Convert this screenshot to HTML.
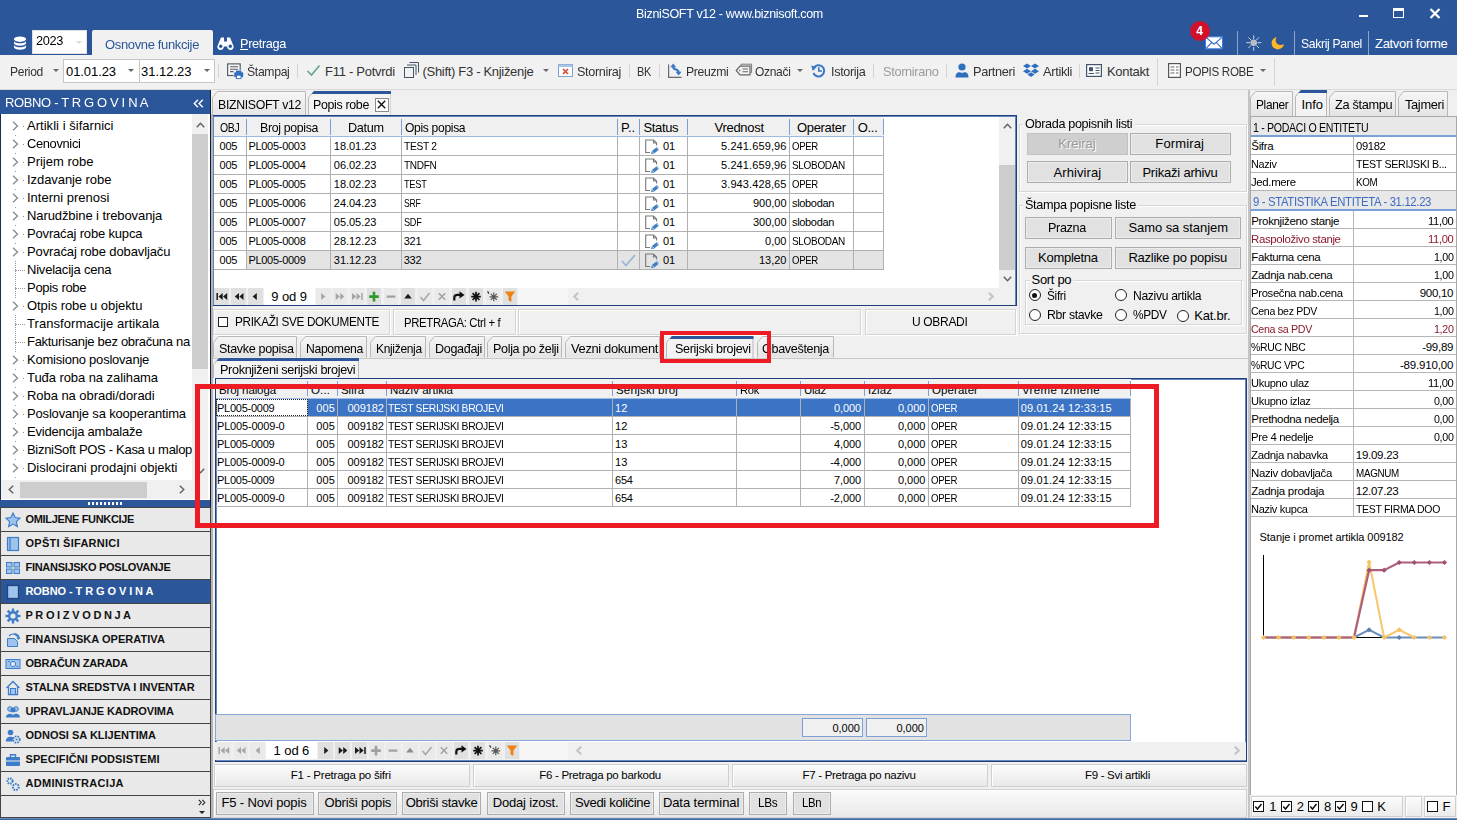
<!DOCTYPE html>
<html><head><meta charset="utf-8"><title>BizniSOFT</title>
<style>
*{box-sizing:border-box;margin:0;padding:0}
html,body{width:1457px;height:820px;overflow:hidden;background:#f0f0f0;font-family:"Liberation Sans",sans-serif;font-size:13px;color:#000}
.a{position:absolute}
.t{position:absolute;white-space:pre;letter-spacing:-0.35px;line-height:16px}
.sep{position:absolute;top:64px;width:1px;height:14px;background:#d4d4d4}
.dd{position:absolute;width:0;height:0;border-left:3px solid transparent;border-right:3px solid transparent;border-top:3px solid #666}
.c{position:absolute;border-right:1px solid #b0b0b0;border-bottom:1px solid #b0b0b0;overflow:hidden}
.btn{position:absolute;background:#e1e1e1;border:1px solid #adadad;box-shadow:inset 0 0 0 1px #ececec}
</style></head><body>
<div class="a" style="left:0;top:0;width:1457px;height:55px;background:#2b579a"></div>
<div class="t" style="top:6px;left:636px;transform:scaleX(0.963);transform-origin:0 0;letter-spacing:-0.35px;color:#fff;">BizniSOFT v12 - www.biznisoft.com</div>
<div class="a" style="left:1359px;top:15px;width:9px;height:2px;background:#fff"></div>
<div class="a" style="left:1393px;top:8px;width:11px;height:10px;border:1px solid #fff;border-top:3px solid #fff"></div>
<svg class="a" style="left:1429px;top:8px" width="12" height="11" viewBox="0 0 12 11"><path d="M1.5 1 L10.5 10 M10.5 1 L1.5 10" stroke="#fff" stroke-width="2.2"/></svg>
<svg class="a" style="left:13px;top:36px" width="14" height="15" viewBox="0 0 14 15"><ellipse cx="7" cy="3.2" rx="6" ry="2.7" fill="#fff"/><path d="M1 5.2 C2.5 8 11.5 8 13 5.2 V7.6 C11.5 10.6 2.5 10.6 1 7.6Z" fill="#fff"/><path d="M1 9.2 C2.5 12 11.5 12 13 9.2 V11.6 C11.5 14.6 2.5 14.6 1 11.6Z" fill="#fff"/></svg>
<div class="a" style="left:32px;top:30px;width:55px;height:24px;background:#fff;border:1px solid #e0e0e0"></div>
<div class="t" style="top:33px;left:36px;transform:scaleX(0.981);transform-origin:0 0;letter-spacing:-0.35px;">2023</div>
<div class="dd" style="left:76px;top:41px;border-top-color:#dcdcdc"></div>
<div class="a" style="left:92px;top:30px;width:121px;height:25px;background:#f1f1f1;border-radius:2px 2px 0 0"></div>
<div class="t" style="top:36.5px;left:105px;transform:scaleX(0.999);transform-origin:0 0;letter-spacing:-0.35px;color:#2b579a;">Osnovne funkcije</div>
<svg class="a" style="left:217px;top:37px" width="17" height="13" viewBox="0 0 17 13"><path d="M4 0.5h3v4h3v-4h3l3.5 8.5a3.2 3.2 0 1 1-6.3 0.5h-3.4a3.2 3.2 0 1 1-6.3-0.5Z" fill="#fff"/><circle cx="3.7" cy="9.3" r="1.7" fill="#2b579a"/><circle cx="13.3" cy="9.3" r="1.7" fill="#2b579a"/></svg>
<div class="t" style="top:36px;left:240px;transform:scaleX(0.977);transform-origin:0 0;letter-spacing:-0.35px;color:#fff;"><u>P</u>retraga</div>
<svg class="a" style="left:1205px;top:36px" width="18" height="14" viewBox="0 0 18 14"><rect x="0.5" y="0.8" width="17" height="12" fill="#fff" stroke="#3d7be0" stroke-width="1"/><path d="M1 1.4 L9 8.2 L17 1.4 M1 12.4 L6.8 6.4 M17 12.4 L11.2 6.4" fill="none" stroke="#2f6bc9" stroke-width="1.1"/></svg>
<div class="a" style="left:1189.7px;top:21px;width:20px;height:20px;border-radius:10px;background:#d1102a;color:#fff;font-weight:bold;font-size:12px;text-align:center;line-height:21px">4</div>
<div class="a" style="left:1237px;top:31px;width:1px;height:24px;background:#8fa6cc"></div>
<svg class="a" style="left:1245px;top:34px" width="18" height="18" viewBox="0 0 18 18"><g stroke="#c3d3ee" stroke-width="1"><path d="M8.7 1.2v4M8.7 12.8v4M1.2 8.7h4M12.4 8.7h4M3.4 3.4l2.6 2.6M11.4 11.4l2.6 2.6M14 3.4l-2.6 2.6M6 11.4l-2.6 2.6"/></g><circle cx="8.7" cy="8.7" r="3.3" fill="#b9bdc6"/></svg>
<svg class="a" style="left:1270px;top:35px" width="16" height="16" viewBox="0 0 16 16"><defs><mask id="mm"><rect width="16" height="16" fill="#fff"/><circle cx="10.6" cy="5.2" r="4.9" fill="#000"/></mask></defs><circle cx="7.8" cy="8.2" r="6.2" fill="#fdb627" mask="url(#mm)"/></svg>
<div class="a" style="left:1294px;top:31px;width:1px;height:24px;background:#8fa6cc"></div>
<div class="t" style="top:36px;left:1301px;transform:scaleX(0.936);transform-origin:0 0;letter-spacing:-0.35px;color:#fff;">Sakrij Panel</div>
<div class="a" style="left:1368px;top:31px;width:1px;height:24px;background:#8fa6cc"></div>
<div class="t" style="top:36px;left:1375px;letter-spacing:-0.31px;color:#fff;">Zatvori forme</div>
<div class="a" style="left:0;top:55px;width:1457px;height:35px;background:#f1f1f1;border-bottom:1px solid #d9d9d9"></div>
<div class="t" style="top:63.8px;left:10px;transform:scaleX(0.930);transform-origin:0 0;letter-spacing:-0.35px;color:#333;">Period</div>
<div class="dd" style="left:53px;top:69px"></div>
<div class="a" style="left:63px;top:59px;width:77px;height:24px;background:#fff;border:1px solid #c6c6c6"></div>
<div class="a" style="left:139px;top:59px;width:76px;height:24px;background:#fff;border:1px solid #c6c6c6"></div>
<div class="t" style="top:63.8px;left:66px;letter-spacing:-0.08px;">01.01.23</div>
<div class="t" style="top:63.8px;left:141px;letter-spacing:-0.01px;">31.12.23</div>
<div class="dd" style="left:128px;top:69px"></div>
<div class="dd" style="left:204px;top:69px"></div>
<div class="sep" style="left:218px"></div>
<svg class="a" style="left:226px;top:62px" width="19" height="18" viewBox="0 0 19 18"><rect x="1.6" y="1.9" width="12.6" height="11.6" fill="#f6f6f6" stroke="#5a6068" stroke-width="1.2"/><path d="M4 4.8h8M4 7.2h8M4 9.6h4" stroke="#5a6068" stroke-width="1.1"/><rect x="7.6" y="8" width="10.2" height="9.4" fill="#f1f1f1"/><rect x="8.2" y="10.2" width="9" height="5" rx="1" fill="#2f6fc0"/><rect x="10" y="8.6" width="5.4" height="2.2" fill="#2f6fc0"/><rect x="10.4" y="13.2" width="4.6" height="3.4" fill="#fff" stroke="#2f6fc0" stroke-width="0.9"/></svg>
<div class="t" style="top:63.8px;left:246.5px;transform:scaleX(0.939);transform-origin:0 0;letter-spacing:-0.35px;color:#333;">Štampaj</div>
<div class="sep" style="left:297px"></div>
<svg class="a" style="left:306px;top:64px" width="15" height="13" viewBox="0 0 15 13"><path d="M1.5 7 L5.5 11 L13.5 1.5" fill="none" stroke="#6aa58a" stroke-width="1.7"/></svg>
<div class="t" style="top:63.8px;left:325px;letter-spacing:-0.27px;color:#333;">F11 - Potvrdi</div>
<svg class="a" style="left:403px;top:62px" width="17" height="17" viewBox="0 0 17 17"><path d="M6.5 0.5h9v10" fill="none" stroke="#44546a" stroke-width="1"/><path d="M4 3h9v10" fill="none" stroke="#44546a" stroke-width="1"/><rect x="1.5" y="5.5" width="9" height="10" fill="#f1f1f1" stroke="#44546a" stroke-width="1"/></svg>
<div class="t" style="top:63.8px;left:422.5px;letter-spacing:-0.31px;color:#333;">(Shift) F3 - Knjiženje</div>
<div class="dd" style="left:543px;top:69px"></div>
<svg class="a" style="left:558px;top:63px" width="15" height="15" viewBox="0 0 15 15"><rect x="0.5" y="1.5" width="14" height="12" fill="#fff" stroke="#7aa3d8" stroke-width="1"/><rect x="0.5" y="1.5" width="14" height="2.5" fill="#a9c4e8"/><path d="M5 6l5 5M10 6l-5 5" stroke="#d8452e" stroke-width="1.6"/></svg>
<div class="t" style="top:63.8px;left:576.5px;transform:scaleX(0.972);transform-origin:0 0;letter-spacing:-0.35px;color:#333;">Storniraj</div>
<div class="sep" style="left:628.5px"></div>
<div class="t" style="top:63.8px;left:637px;transform:scaleX(0.841);transform-origin:0 0;letter-spacing:-0.35px;color:#333;">BK</div>
<div class="sep" style="left:658.5px"></div>
<svg class="a" style="left:667px;top:62px" width="16" height="17" viewBox="0 0 16 17"><path d="M1.6 2.5V15.3H14.6" fill="none" stroke="#6a6a6a" stroke-width="1.2"/><path d="M6.2 5 C6.2 8.6 11.6 6.4 11.6 10.2" fill="none" stroke="#3a78c4" stroke-width="2.1"/><path d="M3.2 5.2h6L6.2 1.4z" fill="#3a78c4"/><path d="M8.6 9.8h6l-3 3.8z" fill="#3a78c4"/></svg>
<div class="t" style="top:63.8px;left:686px;transform:scaleX(0.939);transform-origin:0 0;letter-spacing:-0.35px;color:#333;">Preuzmi</div>
<svg class="a" style="left:735px;top:63px" width="18" height="14" viewBox="0 0 18 14"><path d="M6 2.6V1.2h10.6v8.4h-1.2" fill="none" stroke="#777" stroke-width="1"/><path d="M5 3.2h10v8.6H5L1.2 7.5Z" fill="#f3f3f3" stroke="#666" stroke-width="1.2"/><path d="M7.5 6h5.5M7.5 8.8h5.5" stroke="#666" stroke-width="1.1"/><circle cx="4.8" cy="7.5" r="0.8" fill="#666"/></svg>
<div class="t" style="top:63.8px;left:755px;transform:scaleX(0.925);transform-origin:0 0;letter-spacing:-0.35px;color:#333;">Označi</div>
<div class="dd" style="left:797px;top:69px"></div>
<svg class="a" style="left:811px;top:63px" width="15" height="15" viewBox="0 0 15 15"><path d="M2.6 5.2 A5.6 5.6 0 1 1 2.4 10" fill="none" stroke="#3a78c4" stroke-width="2"/><path d="M0.2 2.6 L5.6 4 L1.8 8Z" fill="#3a78c4"/><path d="M7.8 4.2v3.8h3.2" fill="none" stroke="#3a78c4" stroke-width="1.6"/></svg>
<div class="t" style="top:63.8px;left:831px;transform:scaleX(0.972);transform-origin:0 0;letter-spacing:-0.35px;color:#333;">Istorija</div>
<div class="sep" style="left:873px"></div>
<div class="t" style="top:63.8px;left:882.5px;transform:scaleX(0.983);transform-origin:0 0;letter-spacing:-0.35px;color:#9b9b9b;">Stornirano</div>
<div class="sep" style="left:945.5px"></div>
<svg class="a" style="left:955px;top:63px" width="14" height="15" viewBox="0 0 14 15"><circle cx="7" cy="4" r="3.6" fill="#2f6fc0"/><path d="M0.5 14.5 C0.5 9 4 8.5 7 10 C10 8.5 13.5 9 13.5 14.5Z" fill="#2f6fc0"/></svg>
<div class="t" style="top:63.8px;left:973px;transform:scaleX(0.983);transform-origin:0 0;letter-spacing:-0.35px;color:#333;">Partneri</div>
<svg class="a" style="left:1023px;top:63px" width="16" height="15" viewBox="0 0 16 15"><path d="M4 0.5 L8 3 L4 5.5 L0 3Z M12 0.5 L16 3 L12 5.5 L8 3Z M4 5.8 L8 8.3 L4 10.8 L0 8.3Z M12 5.8 L16 8.3 L12 10.8 L8 8.3Z M8 9.3 L11.6 11.6 L8 14 L4.4 11.6Z" fill="#2f6fc0"/></svg>
<div class="t" style="top:63.8px;left:1043px;transform:scaleX(0.989);transform-origin:0 0;letter-spacing:-0.35px;color:#333;">Artikli</div>
<div class="sep" style="left:1078.5px"></div>
<svg class="a" style="left:1086px;top:64px" width="16" height="13" viewBox="0 0 16 13"><rect x="0.6" y="0.6" width="14.8" height="11.8" fill="#fff" stroke="#44546a" stroke-width="1.2"/><rect x="3" y="3.2" width="4" height="4" fill="#44546a"/><path d="M2.5 9.5h5.5M9.5 4h4M9.5 6.5h4M9.5 9h4" stroke="#44546a" stroke-width="1.1"/></svg>
<div class="t" style="top:63.8px;left:1107px;letter-spacing:-0.3px;color:#333;">Kontakt</div>
<div class="sep" style="left:1157px;top:58px;height:28px"></div>
<svg class="a" style="left:1168px;top:63px" width="13" height="15" viewBox="0 0 13 15"><rect x="0.6" y="0.6" width="11.8" height="13.8" fill="#fff" stroke="#555" stroke-width="1.2"/><path d="M2.5 4h4M2.5 7h4M2.5 10h4M8 4h2.5M8 7h2.5M8 10h2.5" stroke="#666" stroke-width="1"/></svg>
<div class="t" style="top:63.8px;left:1185px;transform:scaleX(0.893);transform-origin:0 0;letter-spacing:-0.35px;color:#333;">POPIS ROBE</div>
<div class="dd" style="left:1260px;top:69px"></div>
<div class="sep" style="left:1274px;top:58px;height:28px"></div>
<div class="a" style="left:0;top:90px;width:211px;height:418px;background:#fff;border-left:1px solid #1b2f55;border-right:1px solid #1b2f55;border-top:1px solid #14233f"></div>
<div class="a" style="left:0;top:507px;width:1px;height:311px;background:#444"></div>
<div class="a" style="left:0;top:90px;width:210px;height:24px;background:#2b579a"></div>
<div class="t" style="top:95px;left:5px;transform:scaleX(0.999);transform-origin:0 0;letter-spacing:-0.35px;color:#fff;">ROBNO - T R G O V I N A</div>
<svg class="a" style="left:193px;top:99px" width="11" height="9" viewBox="0 0 11 9"><path d="M5 0.8 L1.3 4.5 L5 8.2 M9.8 0.8 L6.1 4.5 L9.8 8.2" fill="none" stroke="#fff" stroke-width="1.4"/></svg>
<div class="a" style="left:1px;top:114px;width:191px;height:366px;overflow:hidden">
<div class="a" style="left:13.5px;top:18px;width:0;height:348px;border-left:1px dotted #9a9a9a"></div>
<div class="a" style="left:9px;top:4px;width:10px;height:16px;background:#fff"></div>
<svg class="a" style="left:11px;top:7px" width="7" height="10" viewBox="0 0 7 10"><path d="M1 0.8 L5.5 5 L1 9.2" fill="none" stroke="#8a8a8a" stroke-width="1.3"/></svg>
<div class="a" style="left:22px;top:12px;width:1px;height:1px;background:#8a8a8a"></div>
<div class="t" style="top:4px;left:26px;letter-spacing:0.03px;">Artikli i šifarnici</div>
<div class="a" style="left:9px;top:22px;width:10px;height:16px;background:#fff"></div>
<svg class="a" style="left:11px;top:25px" width="7" height="10" viewBox="0 0 7 10"><path d="M1 0.8 L5.5 5 L1 9.2" fill="none" stroke="#8a8a8a" stroke-width="1.3"/></svg>
<div class="a" style="left:22px;top:30px;width:1px;height:1px;background:#8a8a8a"></div>
<div class="t" style="top:22px;left:26px;transform:scaleX(0.992);transform-origin:0 0;letter-spacing:-0.35px;">Cenovnici</div>
<div class="a" style="left:9px;top:40px;width:10px;height:16px;background:#fff"></div>
<svg class="a" style="left:11px;top:43px" width="7" height="10" viewBox="0 0 7 10"><path d="M1 0.8 L5.5 5 L1 9.2" fill="none" stroke="#8a8a8a" stroke-width="1.3"/></svg>
<div class="a" style="left:22px;top:48px;width:1px;height:1px;background:#8a8a8a"></div>
<div class="t" style="top:40px;left:26px;letter-spacing:-0.01px;">Prijem robe</div>
<div class="a" style="left:9px;top:58px;width:10px;height:16px;background:#fff"></div>
<svg class="a" style="left:11px;top:61px" width="7" height="10" viewBox="0 0 7 10"><path d="M1 0.8 L5.5 5 L1 9.2" fill="none" stroke="#8a8a8a" stroke-width="1.3"/></svg>
<div class="a" style="left:22px;top:66px;width:1px;height:1px;background:#8a8a8a"></div>
<div class="t" style="top:58px;left:26px;letter-spacing:-0.07px;">Izdavanje robe</div>
<div class="a" style="left:9px;top:76px;width:10px;height:16px;background:#fff"></div>
<svg class="a" style="left:11px;top:79px" width="7" height="10" viewBox="0 0 7 10"><path d="M1 0.8 L5.5 5 L1 9.2" fill="none" stroke="#8a8a8a" stroke-width="1.3"/></svg>
<div class="a" style="left:22px;top:84px;width:1px;height:1px;background:#8a8a8a"></div>
<div class="t" style="top:76px;left:26px;letter-spacing:0.0px;">Interni prenosi</div>
<div class="a" style="left:9px;top:94px;width:10px;height:16px;background:#fff"></div>
<svg class="a" style="left:11px;top:97px" width="7" height="10" viewBox="0 0 7 10"><path d="M1 0.8 L5.5 5 L1 9.2" fill="none" stroke="#8a8a8a" stroke-width="1.3"/></svg>
<div class="a" style="left:22px;top:102px;width:1px;height:1px;background:#8a8a8a"></div>
<div class="t" style="top:94px;left:26px;letter-spacing:-0.09px;">Narudžbine i trebovanja</div>
<div class="a" style="left:9px;top:112px;width:10px;height:16px;background:#fff"></div>
<svg class="a" style="left:11px;top:115px" width="7" height="10" viewBox="0 0 7 10"><path d="M1 0.8 L5.5 5 L1 9.2" fill="none" stroke="#8a8a8a" stroke-width="1.3"/></svg>
<div class="a" style="left:22px;top:120px;width:1px;height:1px;background:#8a8a8a"></div>
<div class="t" style="top:112px;left:26px;letter-spacing:-0.17px;">Povraćaj robe kupca</div>
<div class="a" style="left:9px;top:130px;width:10px;height:16px;background:#fff"></div>
<svg class="a" style="left:11px;top:133px" width="7" height="10" viewBox="0 0 7 10"><path d="M1 0.8 L5.5 5 L1 9.2" fill="none" stroke="#8a8a8a" stroke-width="1.3"/></svg>
<div class="a" style="left:22px;top:138px;width:1px;height:1px;background:#8a8a8a"></div>
<div class="t" style="top:130px;left:26px;letter-spacing:-0.11px;">Povraćaj robe dobavljaču</div>
<div class="a" style="left:14px;top:156px;width:10px;height:0;border-top:1px dotted #9a9a9a"></div>
<div class="t" style="top:148px;left:26px;letter-spacing:-0.21px;">Nivelacija cena</div>
<div class="a" style="left:14px;top:174px;width:10px;height:0;border-top:1px dotted #9a9a9a"></div>
<div class="t" style="top:166px;left:26px;letter-spacing:-0.29px;">Popis robe</div>
<div class="a" style="left:9px;top:184px;width:10px;height:16px;background:#fff"></div>
<svg class="a" style="left:11px;top:187px" width="7" height="10" viewBox="0 0 7 10"><path d="M1 0.8 L5.5 5 L1 9.2" fill="none" stroke="#8a8a8a" stroke-width="1.3"/></svg>
<div class="a" style="left:22px;top:192px;width:1px;height:1px;background:#8a8a8a"></div>
<div class="t" style="top:184px;left:26px;letter-spacing:-0.05px;">Otpis robe u objektu</div>
<div class="a" style="left:14px;top:210px;width:10px;height:0;border-top:1px dotted #9a9a9a"></div>
<div class="t" style="top:202px;left:26px;letter-spacing:0.06px;">Transformacije artikala</div>
<div class="a" style="left:14px;top:228px;width:10px;height:0;border-top:1px dotted #9a9a9a"></div>
<div class="t" style="top:220px;left:26px;letter-spacing:-0.3px;">Fakturisanje bez obračuna na</div>
<div class="a" style="left:9px;top:238px;width:10px;height:16px;background:#fff"></div>
<svg class="a" style="left:11px;top:241px" width="7" height="10" viewBox="0 0 7 10"><path d="M1 0.8 L5.5 5 L1 9.2" fill="none" stroke="#8a8a8a" stroke-width="1.3"/></svg>
<div class="a" style="left:22px;top:246px;width:1px;height:1px;background:#8a8a8a"></div>
<div class="t" style="top:238px;left:26px;letter-spacing:-0.22px;">Komisiono poslovanje</div>
<div class="a" style="left:9px;top:256px;width:10px;height:16px;background:#fff"></div>
<svg class="a" style="left:11px;top:259px" width="7" height="10" viewBox="0 0 7 10"><path d="M1 0.8 L5.5 5 L1 9.2" fill="none" stroke="#8a8a8a" stroke-width="1.3"/></svg>
<div class="a" style="left:22px;top:264px;width:1px;height:1px;background:#8a8a8a"></div>
<div class="t" style="top:256px;left:26px;letter-spacing:-0.07px;">Tuđa roba na zalihama</div>
<div class="a" style="left:9px;top:274px;width:10px;height:16px;background:#fff"></div>
<svg class="a" style="left:11px;top:277px" width="7" height="10" viewBox="0 0 7 10"><path d="M1 0.8 L5.5 5 L1 9.2" fill="none" stroke="#8a8a8a" stroke-width="1.3"/></svg>
<div class="a" style="left:22px;top:282px;width:1px;height:1px;background:#8a8a8a"></div>
<div class="t" style="top:274px;left:26px;letter-spacing:-0.05px;">Roba na obradi/doradi</div>
<div class="a" style="left:9px;top:292px;width:10px;height:16px;background:#fff"></div>
<svg class="a" style="left:11px;top:295px" width="7" height="10" viewBox="0 0 7 10"><path d="M1 0.8 L5.5 5 L1 9.2" fill="none" stroke="#8a8a8a" stroke-width="1.3"/></svg>
<div class="a" style="left:22px;top:300px;width:1px;height:1px;background:#8a8a8a"></div>
<div class="t" style="top:292px;left:26px;letter-spacing:-0.17px;">Poslovanje sa kooperantima</div>
<div class="a" style="left:9px;top:310px;width:10px;height:16px;background:#fff"></div>
<svg class="a" style="left:11px;top:313px" width="7" height="10" viewBox="0 0 7 10"><path d="M1 0.8 L5.5 5 L1 9.2" fill="none" stroke="#8a8a8a" stroke-width="1.3"/></svg>
<div class="a" style="left:22px;top:318px;width:1px;height:1px;background:#8a8a8a"></div>
<div class="t" style="top:310px;left:26px;letter-spacing:-0.21px;">Evidencija ambalaže</div>
<div class="a" style="left:9px;top:328px;width:10px;height:16px;background:#fff"></div>
<svg class="a" style="left:11px;top:331px" width="7" height="10" viewBox="0 0 7 10"><path d="M1 0.8 L5.5 5 L1 9.2" fill="none" stroke="#8a8a8a" stroke-width="1.3"/></svg>
<div class="a" style="left:22px;top:336px;width:1px;height:1px;background:#8a8a8a"></div>
<div class="t" style="top:328px;left:26px;letter-spacing:-0.3px;">BizniSoft POS - Kasa u maloprodaji</div>
<div class="a" style="left:9px;top:346px;width:10px;height:16px;background:#fff"></div>
<svg class="a" style="left:11px;top:349px" width="7" height="10" viewBox="0 0 7 10"><path d="M1 0.8 L5.5 5 L1 9.2" fill="none" stroke="#8a8a8a" stroke-width="1.3"/></svg>
<div class="a" style="left:22px;top:354px;width:1px;height:1px;background:#8a8a8a"></div>
<div class="t" style="top:346px;left:26px;letter-spacing:-0.02px;">Dislocirani prodajni objekti</div>
<div class="a" style="left:9px;top:364px;width:10px;height:16px;background:#fff"></div>
<svg class="a" style="left:11px;top:367px" width="7" height="10" viewBox="0 0 7 10"><path d="M1 0.8 L5.5 5 L1 9.2" fill="none" stroke="#8a8a8a" stroke-width="1.3"/></svg>
<div class="a" style="left:22px;top:372px;width:1px;height:1px;background:#8a8a8a"></div>
<div class="t" style="top:364px;left:26px;letter-spacing:-0.3px;">Usluge u maloprodaji</div>
</div>
<div class="a" style="left:209.7px;top:90px;width:1.5px;height:418px;background:#101c36"></div>
<div class="a" style="left:192px;top:114px;width:16px;height:366px;background:#f0f0f0"></div>
<div class="a" style="left:192px;top:134px;width:16px;height:235px;background:#cdcdcd"></div>
<svg class="a" style="left:196px;top:122px" width="9" height="6" viewBox="0 0 9 6"><path d="M0.8 5.2 L4.5 1.2 L8.2 5.2" fill="none" stroke="#606060" stroke-width="1.4"/></svg>
<svg class="a" style="left:196px;top:468px" width="9" height="6" viewBox="0 0 9 6"><path d="M0.8 0.8 L4.5 4.8 L8.2 0.8" fill="none" stroke="#606060" stroke-width="1.4"/></svg>
<div class="a" style="left:1px;top:480px;width:207px;height:19px;background:#f0f0f0"></div>
<div class="a" style="left:20px;top:482px;width:127px;height:16px;background:#cdcdcd"></div>
<svg class="a" style="left:8px;top:485px" width="6" height="9" viewBox="0 0 6 9"><path d="M5.2 0.8 L1.2 4.5 L5.2 8.2" fill="none" stroke="#606060" stroke-width="1.4"/></svg>
<svg class="a" style="left:179px;top:485px" width="6" height="9" viewBox="0 0 6 9"><path d="M0.8 0.8 L4.8 4.5 L0.8 8.2" fill="none" stroke="#606060" stroke-width="1.4"/></svg>
<div class="a" style="left:0;top:500px;width:210px;height:8px;background:#2b579a"></div>
<div class="a" style="left:88px;top:502px;width:36px;height:3px;background:repeating-linear-gradient(90deg,#fff 0,#fff 2px,transparent 2px,transparent 4px)"></div>
<div class="a" style="left:1px;top:507px;width:210px;height:25px;background:#e9e9e9;border-top:1px solid #444;border-bottom:1px solid #444;border-right:1px solid #444"></div>
<svg class="a" style="left:5px;top:512px" width="16" height="16" viewBox="0 0 16 16"><path d="M8 1 L10.1 5.6 L15 6.2 L11.4 9.6 L12.4 14.6 L8 12.1 L3.6 14.6 L4.6 9.6 L1 6.2 L5.9 5.6Z" fill="#9ec3ee" stroke="#3d7cc9" stroke-width="1.1"/></svg>
<div class="t" style="top:511px;left:25.5px;letter-spacing:-0.34px;font-size:11px;color:#111;font-weight:bold;">OMILJENE FUNKCIJE</div>
<div class="a" style="left:1px;top:531px;width:210px;height:25px;background:#e9e9e9;border-top:1px solid #444;border-bottom:1px solid #444;border-right:1px solid #444"></div>
<svg class="a" style="left:5px;top:536px" width="16" height="16" viewBox="0 0 16 16"><rect x="2.5" y="1.5" width="11" height="13" fill="#9ec3ee" stroke="#3d7cc9" stroke-width="1.2"/><path d="M5 1.5v13" stroke="#3d7cc9" stroke-width="1.2"/></svg>
<div class="t" style="top:535px;left:25.5px;letter-spacing:0.26px;font-size:11px;color:#111;font-weight:bold;">OPŠTI ŠIFARNICI</div>
<div class="a" style="left:1px;top:555px;width:210px;height:25px;background:#e9e9e9;border-top:1px solid #444;border-bottom:1px solid #444;border-right:1px solid #444"></div>
<svg class="a" style="left:5px;top:560px" width="16" height="16" viewBox="0 0 16 16"><rect x="1.5" y="2.5" width="5.5" height="4.5" fill="#9ec3ee" stroke="#3d7cc9"/><rect x="9" y="2.5" width="5.5" height="4.5" fill="#9ec3ee" stroke="#3d7cc9"/><rect x="1.5" y="9" width="5.5" height="4.5" fill="#9ec3ee" stroke="#3d7cc9"/><rect x="9" y="9" width="5.5" height="4.5" fill="#9ec3ee" stroke="#3d7cc9"/></svg>
<div class="t" style="top:559px;left:25.5px;letter-spacing:-0.29px;font-size:11px;color:#111;font-weight:bold;">FINANSIJSKO POSLOVANJE</div>
<div class="a" style="left:1px;top:579px;width:210px;height:25px;background:#2b579a;border-top:1px solid #444;border-bottom:1px solid #444;border-right:1px solid #444"></div>
<svg class="a" style="left:5px;top:584px" width="16" height="16" viewBox="0 0 16 16"><rect x="2.5" y="1.5" width="11" height="13" fill="#9ec3ee" stroke="#1f4580" stroke-width="1.3"/></svg>
<div class="t" style="top:583px;left:25.5px;letter-spacing:-0.08px;font-size:11px;color:#fff;font-weight:bold;">ROBNO - T R G O V I N A</div>
<div class="a" style="left:1px;top:603px;width:210px;height:25px;background:#e9e9e9;border-top:1px solid #444;border-bottom:1px solid #444;border-right:1px solid #444"></div>
<svg class="a" style="left:5px;top:608px" width="16" height="16" viewBox="0 0 16 16"><g fill="#3d7cc9"><circle cx="8" cy="8" r="5"/><rect x="6.8" y="0.5" width="2.4" height="15"/><rect x="0.5" y="6.8" width="15" height="2.4"/><rect x="6.8" y="0.5" width="2.4" height="15" transform="rotate(45 8 8)"/><rect x="6.8" y="0.5" width="2.4" height="15" transform="rotate(-45 8 8)"/></g><circle cx="8" cy="8" r="2.6" fill="#e9e9e9"/></svg>
<div class="t" style="top:607px;left:25.5px;letter-spacing:-0.2px;font-size:11px;color:#111;font-weight:bold;">P R O I Z V O D N J A</div>
<div class="a" style="left:1px;top:627px;width:210px;height:25px;background:#e9e9e9;border-top:1px solid #444;border-bottom:1px solid #444;border-right:1px solid #444"></div>
<svg class="a" style="left:5px;top:632px" width="16" height="16" viewBox="0 0 16 16"><path d="M2.5 6.5h7l3 3v5h-10z" fill="#9ec3ee" stroke="#3d7cc9"/><path d="M4 4 C7 0.5 12 2 13 6 M9 1.5 C12 1.5 14.5 4 14.5 7" fill="none" stroke="#3d7cc9" stroke-width="1.2"/><path d="M11.5 6.5l2 1.5 1-2.5z" fill="#3d7cc9"/></svg>
<div class="t" style="top:631px;left:25.5px;letter-spacing:0.04px;font-size:11px;color:#111;font-weight:bold;">FINANSIJSKA OPERATIVA</div>
<div class="a" style="left:1px;top:651px;width:210px;height:25px;background:#e9e9e9;border-top:1px solid #444;border-bottom:1px solid #444;border-right:1px solid #444"></div>
<svg class="a" style="left:5px;top:656px" width="16" height="16" viewBox="0 0 16 16"><rect x="1" y="3.5" width="14" height="9" fill="#9ec3ee" stroke="#3d7cc9"/><circle cx="8" cy="8" r="2.6" fill="#e9e9e9" stroke="#3d7cc9"/><path d="M3 5.5h1.5M11.5 10.5H13" stroke="#3d7cc9"/></svg>
<div class="t" style="top:655px;left:25.5px;letter-spacing:-0.25px;font-size:11px;color:#111;font-weight:bold;">OBRAČUN ZARADA</div>
<div class="a" style="left:1px;top:675px;width:210px;height:25px;background:#e9e9e9;border-top:1px solid #444;border-bottom:1px solid #444;border-right:1px solid #444"></div>
<svg class="a" style="left:5px;top:680px" width="16" height="16" viewBox="0 0 16 16"><path d="M1.5 8 L8 1.5 L14.5 8 M3.5 7v7.5h9V7" fill="none" stroke="#3d7cc9" stroke-width="1.3"/><rect x="5.5" y="8.5" width="5" height="6" fill="#9ec3ee" stroke="#3d7cc9"/></svg>
<div class="t" style="top:679px;left:25.5px;letter-spacing:-0.02px;font-size:11px;color:#111;font-weight:bold;">STALNA SREDSTVA I INVENTAR</div>
<div class="a" style="left:1px;top:699px;width:210px;height:25px;background:#e9e9e9;border-top:1px solid #444;border-bottom:1px solid #444;border-right:1px solid #444"></div>
<svg class="a" style="left:5px;top:704px" width="16" height="16" viewBox="0 0 16 16"><circle cx="5" cy="5" r="2.3" fill="#9ec3ee" stroke="#3d7cc9"/><circle cx="11" cy="5" r="2.3" fill="#9ec3ee" stroke="#3d7cc9"/><circle cx="8" cy="6" r="2.5" fill="#3d7cc9"/><path d="M1 13.5 C1 9 6 9 8 11 C10 9 15 9 15 13.5Z" fill="#3d7cc9"/></svg>
<div class="t" style="top:703px;left:25.5px;letter-spacing:-0.12px;font-size:11px;color:#111;font-weight:bold;">UPRAVLJANJE KADROVIMA</div>
<div class="a" style="left:1px;top:723px;width:210px;height:25px;background:#e9e9e9;border-top:1px solid #444;border-bottom:1px solid #444;border-right:1px solid #444"></div>
<svg class="a" style="left:5px;top:728px" width="16" height="16" viewBox="0 0 16 16"><circle cx="5.5" cy="4.5" r="2.8" fill="#3d7cc9"/><path d="M0.8 13.5 C0.8 8.5 6 8 8.5 9.5 L7.5 13.5Z" fill="#3d7cc9"/><circle cx="11.5" cy="11.5" r="3.2" fill="none" stroke="#3d7cc9" stroke-width="1.8" stroke-dasharray="1.6 1"/><circle cx="11.5" cy="11.5" r="1" fill="#3d7cc9"/></svg>
<div class="t" style="top:727px;left:25.5px;letter-spacing:-0.0px;font-size:11px;color:#111;font-weight:bold;">ODNOSI SA KLIJENTIMA</div>
<div class="a" style="left:1px;top:747px;width:210px;height:25px;background:#e9e9e9;border-top:1px solid #444;border-bottom:1px solid #444;border-right:1px solid #444"></div>
<svg class="a" style="left:5px;top:752px" width="16" height="16" viewBox="0 0 16 16"><rect x="1" y="5" width="14" height="9" rx="1" fill="#3d7cc9"/><path d="M5.5 5V2.8h5V5" fill="none" stroke="#3d7cc9" stroke-width="1.4"/><path d="M1 9h14" stroke="#e9e9e9" stroke-width="1"/></svg>
<div class="t" style="top:751px;left:25.5px;letter-spacing:0.07px;font-size:11px;color:#111;font-weight:bold;">SPECIFIČNI PODSISTEMI</div>
<div class="a" style="left:1px;top:771px;width:210px;height:25px;background:#e9e9e9;border-top:1px solid #444;border-bottom:1px solid #444;border-right:1px solid #444"></div>
<svg class="a" style="left:5px;top:776px" width="16" height="16" viewBox="0 0 16 16"><circle cx="5" cy="5" r="2.6" fill="none" stroke="#3d7cc9" stroke-width="2" stroke-dasharray="1.5 0.9"/><circle cx="10.8" cy="11" r="3" fill="none" stroke="#3d7cc9" stroke-width="2" stroke-dasharray="1.6 1"/></svg>
<div class="t" style="top:775px;left:25.5px;letter-spacing:0.3px;font-size:11px;color:#111;font-weight:bold;">ADMINISTRACIJA</div>
<div class="a" style="left:1px;top:795px;width:210px;height:23px;background:#e9e9e9;border-top:1px solid #444;border-bottom:1px solid #444;border-right:1px solid #444"></div>
<svg class="a" style="left:198px;top:799px" width="8" height="7" viewBox="0 0 8 7"><path d="M0.8 0.8 L3.3 3.5 L0.8 6.2 M4.3 0.8 L6.8 3.5 L4.3 6.2" fill="none" stroke="#222" stroke-width="1.1"/></svg>
<div class="dd" style="left:199px;top:811px;border-top-color:#222"></div>
<svg class="a" style="left:211.5px;top:90.5px" width="94" height="25.5" viewBox="0 0 94 25.5"><defs><linearGradient id="tg1" x1="0" y1="0" x2="0" y2="1"><stop offset="0" stop-color="#f6f6f6"/><stop offset="1" stop-color="#e4e4e4"/></linearGradient></defs><path d="M0.5 25.5 V6.5 L5.5 0.5 H93.5 V25.5" fill="url(#tg1)" stroke="#b8b8b8" stroke-width="1"/></svg>
<div class="t" style="top:97px;left:217.5px;transform:scaleX(0.947);transform-origin:0 0;letter-spacing:-0.35px;">BIZNISOFT v12</div>
<svg class="a" style="left:307.5px;top:90.5px" width="83.5" height="25.5" viewBox="0 0 83.5 25.5"><path d="M0.5 25.5 V6.5 L5.5 0.5 H83.0 V25.5" fill="#f3f3f3" stroke="#b8b8b8" stroke-width="1"/><path d="M3.6 3 L6 0 H83.5 V3Z" fill="#2b579a"/></svg>
<div class="t" style="top:97px;left:313px;transform:scaleX(0.955);transform-origin:0 0;letter-spacing:-0.35px;">Popis robe</div>
<div class="a" style="left:374.5px;top:97.5px;width:14px;height:14px;background:#fff;border:1px solid #8a8a8a"></div>
<svg class="a" style="left:377px;top:100px" width="9" height="9" viewBox="0 0 9 9"><path d="M0.8 0.8l7.4 7.4M8.2 0.8l-7.4 7.4" stroke="#111" stroke-width="1.4"/></svg>
<div class="a" style="left:212px;top:115px;width:805px;height:191px;background:#fff;border:1px solid #203f7d;box-shadow:inset 0 0 0 1px #6685bd"></div>
<div class="a" style="left:214px;top:117px;width:670px;height:20px;background:#f0f0f0;border-bottom:1px solid #9db9e4"></div>
<div class="a" style="left:246px;top:119px;width:1px;height:16px;background:#7aa0d8"></div>
<div class="a" style="left:330px;top:119px;width:1px;height:16px;background:#7aa0d8"></div>
<div class="a" style="left:401px;top:119px;width:1px;height:16px;background:#7aa0d8"></div>
<div class="a" style="left:617px;top:119px;width:1px;height:16px;background:#7aa0d8"></div>
<div class="a" style="left:639px;top:119px;width:1px;height:16px;background:#7aa0d8"></div>
<div class="a" style="left:687px;top:119px;width:1px;height:16px;background:#7aa0d8"></div>
<div class="a" style="left:789px;top:119px;width:1px;height:16px;background:#7aa0d8"></div>
<div class="a" style="left:853px;top:119px;width:1px;height:16px;background:#7aa0d8"></div>
<div class="a" style="left:883px;top:119px;width:1px;height:16px;background:#7aa0d8"></div>
<div class="t" style="top:120px;left:219.5px;transform:scaleX(0.804);transform-origin:0 0;letter-spacing:-0.35px;">OBJ</div>
<div class="t" style="top:120px;left:259.5px;transform:scaleX(0.948);transform-origin:0 0;letter-spacing:-0.35px;">Broj popisa</div>
<div class="t" style="top:120px;left:348.3px;transform:scaleX(0.977);transform-origin:0 0;letter-spacing:-0.35px;">Datum</div>
<div class="t" style="top:120px;left:405.3px;transform:scaleX(0.930);transform-origin:0 0;letter-spacing:-0.35px;">Opis popisa</div>
<div class="t" style="top:120px;left:621px;letter-spacing:-0.07px;">P..</div>
<div class="t" style="top:120px;left:643.4px;letter-spacing:-0.34px;">Status</div>
<div class="t" style="top:120px;left:714.5px;letter-spacing:-0.28px;">Vrednost</div>
<div class="t" style="top:120px;left:797px;letter-spacing:-0.33px;">Operater</div>
<div class="t" style="top:120px;left:857.7px;letter-spacing:-0.29px;">O...</div>
<div class="c" style="left:214px;top:137px;width:33px;height:19px;"></div>
<div class="c" style="left:247px;top:137px;width:84px;height:19px;"></div>
<div class="c" style="left:331px;top:137px;width:71px;height:19px;"></div>
<div class="c" style="left:402px;top:137px;width:216px;height:19px;"></div>
<div class="c" style="left:618px;top:137px;width:22px;height:19px;"></div>
<div class="c" style="left:640px;top:137px;width:48px;height:19px;"></div>
<div class="c" style="left:688px;top:137px;width:102px;height:19px;"></div>
<div class="c" style="left:790px;top:137px;width:64px;height:19px;"></div>
<div class="c" style="left:854px;top:137px;width:30px;height:19px;"></div>
<div class="t" style="top:137.5px;left:219.6px;letter-spacing:-0.29px;font-size:11px;">005</div>
<div class="t" style="top:137.5px;left:248.4px;letter-spacing:-0.28px;font-size:11px;">PL005-0003</div>
<div class="t" style="top:137.5px;left:333.8px;letter-spacing:-0.03px;font-size:11px;">18.01.23</div>
<div class="t" style="top:137.5px;left:403.8px;transform:scaleX(0.929);transform-origin:0 0;letter-spacing:-0.35px;font-size:11px;">TEST 2</div>
<svg class="a" style="left:644px;top:138px" width="17" height="17" viewBox="0 0 17 17"><path d="M6 14.5H1.7V2H9.5L12.6 5V7.6M9.5 2V5H12.6" fill="none" stroke="#787878" stroke-width="1.1"/><path d="M8.6 14.6L14 10.2" stroke="#3f7fbf" stroke-width="3.3"/><path d="M6.9 16l0.9-2.6 1.9 2.2z" fill="#3f7fbf"/><path d="M8.2 13.2l2 2.4M12.6 9.6l2 2.4" stroke="#dfe9f5" stroke-width="0.7"/></svg>
<div class="t" style="top:137.5px;left:663px;letter-spacing:-0.22px;font-size:11px;">01</div>
<div class="t" style="top:137.5px;left:721.0px;letter-spacing:0.11px;font-size:11px;">5.241.659,96</div>
<div class="t" style="top:137.5px;left:792px;transform:scaleX(0.873);transform-origin:0 0;letter-spacing:-0.35px;font-size:11px;">OPER</div>
<div class="c" style="left:214px;top:156px;width:33px;height:19px;"></div>
<div class="c" style="left:247px;top:156px;width:84px;height:19px;"></div>
<div class="c" style="left:331px;top:156px;width:71px;height:19px;"></div>
<div class="c" style="left:402px;top:156px;width:216px;height:19px;"></div>
<div class="c" style="left:618px;top:156px;width:22px;height:19px;"></div>
<div class="c" style="left:640px;top:156px;width:48px;height:19px;"></div>
<div class="c" style="left:688px;top:156px;width:102px;height:19px;"></div>
<div class="c" style="left:790px;top:156px;width:64px;height:19px;"></div>
<div class="c" style="left:854px;top:156px;width:30px;height:19px;"></div>
<div class="t" style="top:156.5px;left:219.6px;letter-spacing:-0.29px;font-size:11px;">005</div>
<div class="t" style="top:156.5px;left:248.4px;letter-spacing:-0.28px;font-size:11px;">PL005-0004</div>
<div class="t" style="top:156.5px;left:333.8px;letter-spacing:-0.03px;font-size:11px;">06.02.23</div>
<div class="t" style="top:156.5px;left:403.8px;transform:scaleX(0.915);transform-origin:0 0;letter-spacing:-0.35px;font-size:11px;">TNDFN</div>
<svg class="a" style="left:644px;top:157px" width="17" height="17" viewBox="0 0 17 17"><path d="M6 14.5H1.7V2H9.5L12.6 5V7.6M9.5 2V5H12.6" fill="none" stroke="#787878" stroke-width="1.1"/><path d="M8.6 14.6L14 10.2" stroke="#3f7fbf" stroke-width="3.3"/><path d="M6.9 16l0.9-2.6 1.9 2.2z" fill="#3f7fbf"/><path d="M8.2 13.2l2 2.4M12.6 9.6l2 2.4" stroke="#dfe9f5" stroke-width="0.7"/></svg>
<div class="t" style="top:156.5px;left:663px;letter-spacing:-0.22px;font-size:11px;">01</div>
<div class="t" style="top:156.5px;left:721.0px;letter-spacing:0.11px;font-size:11px;">5.241.659,96</div>
<div class="t" style="top:156.5px;left:792px;transform:scaleX(0.908);transform-origin:0 0;letter-spacing:-0.35px;font-size:11px;">SLOBODAN</div>
<div class="c" style="left:214px;top:175px;width:33px;height:19px;"></div>
<div class="c" style="left:247px;top:175px;width:84px;height:19px;"></div>
<div class="c" style="left:331px;top:175px;width:71px;height:19px;"></div>
<div class="c" style="left:402px;top:175px;width:216px;height:19px;"></div>
<div class="c" style="left:618px;top:175px;width:22px;height:19px;"></div>
<div class="c" style="left:640px;top:175px;width:48px;height:19px;"></div>
<div class="c" style="left:688px;top:175px;width:102px;height:19px;"></div>
<div class="c" style="left:790px;top:175px;width:64px;height:19px;"></div>
<div class="c" style="left:854px;top:175px;width:30px;height:19px;"></div>
<div class="t" style="top:175.5px;left:219.6px;letter-spacing:-0.29px;font-size:11px;">005</div>
<div class="t" style="top:175.5px;left:248.4px;letter-spacing:-0.28px;font-size:11px;">PL005-0005</div>
<div class="t" style="top:175.5px;left:333.8px;letter-spacing:-0.03px;font-size:11px;">18.02.23</div>
<div class="t" style="top:175.5px;left:403.8px;transform:scaleX(0.842);transform-origin:0 0;letter-spacing:-0.35px;font-size:11px;">TEST</div>
<svg class="a" style="left:644px;top:176px" width="17" height="17" viewBox="0 0 17 17"><path d="M6 14.5H1.7V2H9.5L12.6 5V7.6M9.5 2V5H12.6" fill="none" stroke="#787878" stroke-width="1.1"/><path d="M8.6 14.6L14 10.2" stroke="#3f7fbf" stroke-width="3.3"/><path d="M6.9 16l0.9-2.6 1.9 2.2z" fill="#3f7fbf"/><path d="M8.2 13.2l2 2.4M12.6 9.6l2 2.4" stroke="#dfe9f5" stroke-width="0.7"/></svg>
<div class="t" style="top:175.5px;left:663px;letter-spacing:-0.22px;font-size:11px;">01</div>
<div class="t" style="top:175.5px;left:721.0px;letter-spacing:0.11px;font-size:11px;">3.943.428,65</div>
<div class="t" style="top:175.5px;left:792px;transform:scaleX(0.873);transform-origin:0 0;letter-spacing:-0.35px;font-size:11px;">OPER</div>
<div class="c" style="left:214px;top:194px;width:33px;height:19px;"></div>
<div class="c" style="left:247px;top:194px;width:84px;height:19px;"></div>
<div class="c" style="left:331px;top:194px;width:71px;height:19px;"></div>
<div class="c" style="left:402px;top:194px;width:216px;height:19px;"></div>
<div class="c" style="left:618px;top:194px;width:22px;height:19px;"></div>
<div class="c" style="left:640px;top:194px;width:48px;height:19px;"></div>
<div class="c" style="left:688px;top:194px;width:102px;height:19px;"></div>
<div class="c" style="left:790px;top:194px;width:64px;height:19px;"></div>
<div class="c" style="left:854px;top:194px;width:30px;height:19px;"></div>
<div class="t" style="top:194.5px;left:219.6px;letter-spacing:-0.29px;font-size:11px;">005</div>
<div class="t" style="top:194.5px;left:248.4px;letter-spacing:-0.28px;font-size:11px;">PL005-0006</div>
<div class="t" style="top:194.5px;left:333.8px;letter-spacing:-0.03px;font-size:11px;">24.04.23</div>
<div class="t" style="top:194.5px;left:403.8px;transform:scaleX(0.788);transform-origin:0 0;letter-spacing:-0.35px;font-size:11px;">SRF</div>
<svg class="a" style="left:644px;top:195px" width="17" height="17" viewBox="0 0 17 17"><path d="M6 14.5H1.7V2H9.5L12.6 5V7.6M9.5 2V5H12.6" fill="none" stroke="#787878" stroke-width="1.1"/><path d="M8.6 14.6L14 10.2" stroke="#3f7fbf" stroke-width="3.3"/><path d="M6.9 16l0.9-2.6 1.9 2.2z" fill="#3f7fbf"/><path d="M8.2 13.2l2 2.4M12.6 9.6l2 2.4" stroke="#dfe9f5" stroke-width="0.7"/></svg>
<div class="t" style="top:194.5px;left:663px;letter-spacing:-0.22px;font-size:11px;">01</div>
<div class="t" style="top:194.5px;left:753.0px;letter-spacing:-0.03px;font-size:11px;">900,00</div>
<div class="t" style="top:194.5px;left:792px;letter-spacing:-0.33px;font-size:11px;">slobodan</div>
<div class="c" style="left:214px;top:213px;width:33px;height:19px;"></div>
<div class="c" style="left:247px;top:213px;width:84px;height:19px;"></div>
<div class="c" style="left:331px;top:213px;width:71px;height:19px;"></div>
<div class="c" style="left:402px;top:213px;width:216px;height:19px;"></div>
<div class="c" style="left:618px;top:213px;width:22px;height:19px;"></div>
<div class="c" style="left:640px;top:213px;width:48px;height:19px;"></div>
<div class="c" style="left:688px;top:213px;width:102px;height:19px;"></div>
<div class="c" style="left:790px;top:213px;width:64px;height:19px;"></div>
<div class="c" style="left:854px;top:213px;width:30px;height:19px;"></div>
<div class="t" style="top:213.5px;left:219.6px;letter-spacing:-0.29px;font-size:11px;">005</div>
<div class="t" style="top:213.5px;left:248.4px;letter-spacing:-0.28px;font-size:11px;">PL005-0007</div>
<div class="t" style="top:213.5px;left:333.8px;letter-spacing:-0.03px;font-size:11px;">05.05.23</div>
<div class="t" style="top:213.5px;left:403.8px;transform:scaleX(0.835);transform-origin:0 0;letter-spacing:-0.35px;font-size:11px;">SDF</div>
<svg class="a" style="left:644px;top:214px" width="17" height="17" viewBox="0 0 17 17"><path d="M6 14.5H1.7V2H9.5L12.6 5V7.6M9.5 2V5H12.6" fill="none" stroke="#787878" stroke-width="1.1"/><path d="M8.6 14.6L14 10.2" stroke="#3f7fbf" stroke-width="3.3"/><path d="M6.9 16l0.9-2.6 1.9 2.2z" fill="#3f7fbf"/><path d="M8.2 13.2l2 2.4M12.6 9.6l2 2.4" stroke="#dfe9f5" stroke-width="0.7"/></svg>
<div class="t" style="top:213.5px;left:663px;letter-spacing:-0.22px;font-size:11px;">01</div>
<div class="t" style="top:213.5px;left:753.0px;letter-spacing:-0.03px;font-size:11px;">300,00</div>
<div class="t" style="top:213.5px;left:792px;letter-spacing:-0.33px;font-size:11px;">slobodan</div>
<div class="c" style="left:214px;top:232px;width:33px;height:19px;"></div>
<div class="c" style="left:247px;top:232px;width:84px;height:19px;"></div>
<div class="c" style="left:331px;top:232px;width:71px;height:19px;"></div>
<div class="c" style="left:402px;top:232px;width:216px;height:19px;"></div>
<div class="c" style="left:618px;top:232px;width:22px;height:19px;"></div>
<div class="c" style="left:640px;top:232px;width:48px;height:19px;"></div>
<div class="c" style="left:688px;top:232px;width:102px;height:19px;"></div>
<div class="c" style="left:790px;top:232px;width:64px;height:19px;"></div>
<div class="c" style="left:854px;top:232px;width:30px;height:19px;"></div>
<div class="t" style="top:232.5px;left:219.6px;letter-spacing:-0.29px;font-size:11px;">005</div>
<div class="t" style="top:232.5px;left:248.4px;letter-spacing:-0.28px;font-size:11px;">PL005-0008</div>
<div class="t" style="top:232.5px;left:333.8px;letter-spacing:-0.03px;font-size:11px;">28.12.23</div>
<div class="t" style="top:232.5px;left:403.8px;letter-spacing:-0.29px;font-size:11px;">321</div>
<svg class="a" style="left:644px;top:233px" width="17" height="17" viewBox="0 0 17 17"><path d="M6 14.5H1.7V2H9.5L12.6 5V7.6M9.5 2V5H12.6" fill="none" stroke="#787878" stroke-width="1.1"/><path d="M8.6 14.6L14 10.2" stroke="#3f7fbf" stroke-width="3.3"/><path d="M6.9 16l0.9-2.6 1.9 2.2z" fill="#3f7fbf"/><path d="M8.2 13.2l2 2.4M12.6 9.6l2 2.4" stroke="#dfe9f5" stroke-width="0.7"/></svg>
<div class="t" style="top:232.5px;left:663px;letter-spacing:-0.22px;font-size:11px;">01</div>
<div class="t" style="top:232.5px;left:765.0px;letter-spacing:0.02px;font-size:11px;">0,00</div>
<div class="t" style="top:232.5px;left:792px;transform:scaleX(0.908);transform-origin:0 0;letter-spacing:-0.35px;font-size:11px;">SLOBODAN</div>
<div class="c" style="left:214px;top:251px;width:33px;height:19px;"></div>
<div class="c" style="left:247px;top:251px;width:84px;height:19px;background:#e4e4e4;"></div>
<div class="c" style="left:331px;top:251px;width:71px;height:19px;background:#e4e4e4;"></div>
<div class="c" style="left:402px;top:251px;width:216px;height:19px;background:#e4e4e4;"></div>
<div class="c" style="left:618px;top:251px;width:22px;height:19px;background:#e4e4e4;"></div>
<div class="c" style="left:640px;top:251px;width:48px;height:19px;background:#e4e4e4;"></div>
<div class="c" style="left:688px;top:251px;width:102px;height:19px;background:#e4e4e4;"></div>
<div class="c" style="left:790px;top:251px;width:64px;height:19px;background:#e4e4e4;"></div>
<div class="c" style="left:854px;top:251px;width:30px;height:19px;background:#e4e4e4;"></div>
<div class="t" style="top:251.5px;left:219.6px;letter-spacing:-0.29px;font-size:11px;">005</div>
<div class="t" style="top:251.5px;left:248.4px;letter-spacing:-0.28px;font-size:11px;">PL005-0009</div>
<div class="t" style="top:251.5px;left:333.8px;letter-spacing:-0.03px;font-size:11px;">31.12.23</div>
<div class="t" style="top:251.5px;left:403.8px;letter-spacing:-0.29px;font-size:11px;">332</div>
<svg class="a" style="left:644px;top:252px" width="17" height="17" viewBox="0 0 17 17"><path d="M6 14.5H1.7V2H9.5L12.6 5V7.6M9.5 2V5H12.6" fill="none" stroke="#787878" stroke-width="1.1"/><path d="M8.6 14.6L14 10.2" stroke="#3f7fbf" stroke-width="3.3"/><path d="M6.9 16l0.9-2.6 1.9 2.2z" fill="#3f7fbf"/><path d="M8.2 13.2l2 2.4M12.6 9.6l2 2.4" stroke="#dfe9f5" stroke-width="0.7"/></svg>
<div class="t" style="top:251.5px;left:663px;letter-spacing:-0.22px;font-size:11px;">01</div>
<div class="t" style="top:251.5px;left:759.0px;letter-spacing:-0.01px;font-size:11px;">13,20</div>
<div class="t" style="top:251.5px;left:792px;transform:scaleX(0.873);transform-origin:0 0;letter-spacing:-0.35px;font-size:11px;">OPER</div>
<svg class="a" style="left:621px;top:254px" width="15" height="13" viewBox="0 0 15 13"><path d="M1 7l4 4.5 9-10.5" fill="none" stroke="#9ab3d6" stroke-width="1.7"/></svg>
<div class="a" style="left:999px;top:117px;width:16px;height:171px;background:#f0f0f0"></div>
<div class="a" style="left:999px;top:165px;width:16px;height:105px;background:#cdcdcd"></div>
<svg class="a" style="left:1003px;top:123px" width="9" height="6" viewBox="0 0 9 6"><path d="M0.8 5.2 L4.5 1.2 L8.2 5.2" fill="none" stroke="#606060" stroke-width="1.4"/></svg>
<svg class="a" style="left:1003px;top:276px" width="9" height="6" viewBox="0 0 9 6"><path d="M0.8 0.8 L4.5 4.8 L8.2 0.8" fill="none" stroke="#606060" stroke-width="1.4"/></svg>
<div class="a" style="left:214px;top:288px;width:801px;height:17px;background:#f0f0f0"></div>
<div class="a" style="left:518px;top:288px;width:50px;height:17px;background:#f6f6f6"></div>
<div class="a" style="left:214.2px;top:288px;width:14.6px;height:17px;background:#e0e0e0"></div>
<svg class="a" style="left:213.5px;top:288px" width="16" height="17" viewBox="0 0 16 17"><path d="M3.2 5v7" stroke="#1a1a1a" stroke-width="1.5"/><path d="M8.7 5v7l-4.2-3.5zM13.2 5v7l-4.2-3.5z" fill="#1a1a1a"/></svg>
<div class="a" style="left:231.2px;top:288px;width:14.6px;height:17px;background:#e0e0e0"></div>
<svg class="a" style="left:230.5px;top:288px" width="16" height="17" viewBox="0 0 16 17"><path d="M8 5v7l-4.2-3.5zM12.5 5v7l-4.2-3.5z" fill="#1a1a1a"/></svg>
<div class="a" style="left:248.1px;top:288px;width:14.6px;height:17px;background:#e0e0e0"></div>
<svg class="a" style="left:247.4px;top:288px" width="16" height="17" viewBox="0 0 16 17"><path d="M9.8 5v7l-4.2-3.5z" fill="#1a1a1a"/></svg>
<div class="a" style="left:264.1px;top:288px;width:50.9px;height:17px;background:#fff"></div>
<div class="t" style="top:288.5px;left:271.28px;letter-spacing:-0.09px;">9 od 9</div>
<div class="a" style="left:316.0px;top:288px;width:14.6px;height:17px;background:#eaeaea"></div>
<svg class="a" style="left:315.3px;top:288px" width="16" height="17" viewBox="0 0 16 17"><path d="M6.2 5v7l4.2-3.5z" fill="#a6a6a6"/></svg>
<div class="a" style="left:332.9px;top:288px;width:14.6px;height:17px;background:#eaeaea"></div>
<svg class="a" style="left:332.2px;top:288px" width="16" height="17" viewBox="0 0 16 17"><path d="M3.7 5v7l4.2-3.5zM8.2 5v7l4.2-3.5z" fill="#a6a6a6"/></svg>
<div class="a" style="left:349.9px;top:288px;width:14.6px;height:17px;background:#eaeaea"></div>
<svg class="a" style="left:349.2px;top:288px" width="16" height="17" viewBox="0 0 16 17"><path d="M3 5v7l4.2-3.5zM7.5 5v7l4.2-3.5z" fill="#a6a6a6"/><path d="M13 5v7" stroke="#a6a6a6" stroke-width="1.5"/></svg>
<div class="a" style="left:366.8px;top:288px;width:14.6px;height:17px;background:#e0e0e0"></div>
<svg class="a" style="left:366.1px;top:288px" width="16" height="17" viewBox="0 0 16 17"><path d="M8 3.8v9.6M3.2 8.6h9.6" stroke="#2e9a2e" stroke-width="2.6"/></svg>
<div class="a" style="left:383.8px;top:288px;width:14.6px;height:17px;background:#eaeaea"></div>
<svg class="a" style="left:383.1px;top:288px" width="16" height="17" viewBox="0 0 16 17"><path d="M3.6 8.6h8.8" stroke="#a0a0a0" stroke-width="2.2"/></svg>
<div class="a" style="left:400.8px;top:288px;width:14.6px;height:17px;background:#e0e0e0"></div>
<svg class="a" style="left:400.1px;top:288px" width="16" height="17" viewBox="0 0 16 17"><path d="M8 5.8l3.8 4.6h-7.6z" fill="#1a1a1a"/></svg>
<div class="a" style="left:417.7px;top:288px;width:14.6px;height:17px;background:#eaeaea"></div>
<svg class="a" style="left:417.0px;top:288px" width="16" height="17" viewBox="0 0 16 17"><path d="M3.5 9l3 3.5 6-7.5" fill="none" stroke="#a8a8a8" stroke-width="1.6"/></svg>
<div class="a" style="left:434.7px;top:288px;width:14.6px;height:17px;background:#eaeaea"></div>
<svg class="a" style="left:434.0px;top:288px" width="16" height="17" viewBox="0 0 16 17"><path d="M4.8 5.3l6.4 6.4M11.2 5.3l-6.4 6.4" stroke="#a0a0a0" stroke-width="1.5"/></svg>
<div class="a" style="left:451.6px;top:288px;width:14.6px;height:17px;background:#e0e0e0"></div>
<svg class="a" style="left:450.9px;top:288px" width="16" height="17" viewBox="0 0 16 17"><path d="M3.3 12.5 V9.6 C3.3 7.6 4.8 6.9 6.3 6.9 H9" fill="none" stroke="#111" stroke-width="2.2"/><path d="M8.5 3.2l5 3.7-5 3.7z" fill="#111"/></svg>
<div class="a" style="left:468.6px;top:288px;width:14.6px;height:17px;background:#e0e0e0"></div>
<svg class="a" style="left:467.9px;top:288px" width="16" height="17" viewBox="0 0 16 17"><g stroke="#111" stroke-width="1.7"><path d="M8 3.8v9.6M3.2 8.6h9.6M4.6 5.2l6.8 6.8M11.4 5.2l-6.8 6.8"/></g></svg>
<div class="a" style="left:485.6px;top:288px;width:14.6px;height:17px;background:#eaeaea"></div>
<svg class="a" style="left:484.9px;top:288px" width="16" height="17" viewBox="0 0 16 17"><g stroke="#555" stroke-width="1.2"><path d="M8.8 4.6v8.6M4.5 8.9h8.6M5.8 5.9l6 6M11.8 5.9l-6 6"/></g><path d="M2.6 3.4l1.3 2.2" stroke="#333" stroke-width="1.2"/></svg>
<div class="a" style="left:502.5px;top:288px;width:14.6px;height:17px;background:#e0e0e0"></div>
<svg class="a" style="left:501.8px;top:288px" width="16" height="17" viewBox="0 0 16 17"><path d="M2.8 3.6h10.4l-3.8 4.8v5.4l-2.8-1.4v-4z" fill="#f08010"/></svg>
<svg class="a" style="left:573px;top:292px" width="6" height="9" viewBox="0 0 6 9"><path d="M5.2 0.8 L1.2 4.5 L5.2 8.2" fill="none" stroke="#c2c2c2" stroke-width="1.9"/></svg>
<svg class="a" style="left:988px;top:292px" width="6" height="9" viewBox="0 0 6 9"><path d="M0.8 0.8 L4.8 4.5 L0.8 8.2" fill="none" stroke="#c2c2c2" stroke-width="1.9"/></svg>
<div class="a" style="left:212.5px;top:309px;width:177px;height:26px;background:#f0f0f0;border:1px solid #d4d4d4;box-shadow:inset 1px 1px 0 #fff, 1px 1px 0 #fff"></div>
<div class="a" style="left:392.5px;top:309px;width:123px;height:26px;background:#f0f0f0;border:1px solid #d4d4d4;box-shadow:inset 1px 1px 0 #fff, 1px 1px 0 #fff"></div>
<div class="a" style="left:518px;top:309px;width:343px;height:26px;background:#f0f0f0;border:1px solid #d4d4d4;box-shadow:inset 1px 1px 0 #fff, 1px 1px 0 #fff"></div>
<div class="a" style="left:864.5px;top:309px;width:151px;height:26px;background:#f0f0f0;border:1px solid #d4d4d4;box-shadow:inset 1px 1px 0 #fff, 1px 1px 0 #fff"></div>
<div class="a" style="left:218px;top:317px;width:10px;height:10px;background:#fff;border:1px solid #222"></div>
<div class="t" style="top:314px;left:234.5px;transform:scaleX(0.903);transform-origin:0 0;letter-spacing:-0.35px;">PRIKAŽI SVE DOKUMENTE</div>
<div class="t" style="top:314.5px;left:404px;transform:scaleX(0.945);transform-origin:0 0;letter-spacing:-0.35px;font-size:12px;">PRETRAGA: Ctrl + f</div>
<div class="t" style="top:314px;left:912px;transform:scaleX(0.923);transform-origin:0 0;letter-spacing:-0.35px;">U OBRADI</div>
<svg class="a" style="left:213.0px;top:336px" width="84" height="21.5" viewBox="0 0 84 21.5"><defs><linearGradient id="tg3" x1="0" y1="0" x2="0" y2="1"><stop offset="0" stop-color="#f6f6f6"/><stop offset="1" stop-color="#e4e4e4"/></linearGradient></defs><path d="M0.5 21.5 V6.5 L5.5 0.5 H83.5 V21.5" fill="url(#tg3)" stroke="#b8b8b8" stroke-width="1"/></svg>
<div class="t" style="top:341px;left:219px;transform:scaleX(0.967);transform-origin:0 0;letter-spacing:-0.35px;">Stavke popisa</div>
<svg class="a" style="left:300.0px;top:336px" width="67" height="21.5" viewBox="0 0 67 21.5"><defs><linearGradient id="tg4" x1="0" y1="0" x2="0" y2="1"><stop offset="0" stop-color="#f6f6f6"/><stop offset="1" stop-color="#e4e4e4"/></linearGradient></defs><path d="M0.5 21.5 V6.5 L5.5 0.5 H66.5 V21.5" fill="url(#tg4)" stroke="#b8b8b8" stroke-width="1"/></svg>
<div class="t" style="top:341px;left:306.4px;transform:scaleX(0.937);transform-origin:0 0;letter-spacing:-0.35px;">Napomena</div>
<svg class="a" style="left:370.0px;top:336px" width="56" height="21.5" viewBox="0 0 56 21.5"><defs><linearGradient id="tg5" x1="0" y1="0" x2="0" y2="1"><stop offset="0" stop-color="#f6f6f6"/><stop offset="1" stop-color="#e4e4e4"/></linearGradient></defs><path d="M0.5 21.5 V6.5 L5.5 0.5 H55.5 V21.5" fill="url(#tg5)" stroke="#b8b8b8" stroke-width="1"/></svg>
<div class="t" style="top:341px;left:376.2px;transform:scaleX(0.923);transform-origin:0 0;letter-spacing:-0.35px;">Knjiženja</div>
<svg class="a" style="left:429.0px;top:336px" width="56" height="21.5" viewBox="0 0 56 21.5"><defs><linearGradient id="tg6" x1="0" y1="0" x2="0" y2="1"><stop offset="0" stop-color="#f6f6f6"/><stop offset="1" stop-color="#e4e4e4"/></linearGradient></defs><path d="M0.5 21.5 V6.5 L5.5 0.5 H55.5 V21.5" fill="url(#tg6)" stroke="#b8b8b8" stroke-width="1"/></svg>
<div class="t" style="top:341px;left:435.2px;transform:scaleX(0.969);transform-origin:0 0;letter-spacing:-0.35px;">Događaji</div>
<svg class="a" style="left:487.0px;top:336px" width="75" height="21.5" viewBox="0 0 75 21.5"><defs><linearGradient id="tg7" x1="0" y1="0" x2="0" y2="1"><stop offset="0" stop-color="#f6f6f6"/><stop offset="1" stop-color="#e4e4e4"/></linearGradient></defs><path d="M0.5 21.5 V6.5 L5.5 0.5 H74.5 V21.5" fill="url(#tg7)" stroke="#b8b8b8" stroke-width="1"/></svg>
<div class="t" style="top:341px;left:493.4px;transform:scaleX(0.966);transform-origin:0 0;letter-spacing:-0.35px;">Polja po želji</div>
<svg class="a" style="left:564.5px;top:336px" width="95" height="21.5" viewBox="0 0 95 21.5"><defs><linearGradient id="tg8" x1="0" y1="0" x2="0" y2="1"><stop offset="0" stop-color="#f6f6f6"/><stop offset="1" stop-color="#e4e4e4"/></linearGradient></defs><path d="M0.5 21.5 V6.5 L5.5 0.5 H94.5 V21.5" fill="url(#tg8)" stroke="#b8b8b8" stroke-width="1"/></svg>
<div class="t" style="top:341px;left:571.2px;transform:scaleX(0.993);transform-origin:0 0;letter-spacing:-0.35px;">Vezni dokument</div>
<svg class="a" style="left:756.5px;top:336px" width="77" height="21.5" viewBox="0 0 77 21.5"><defs><linearGradient id="tg9" x1="0" y1="0" x2="0" y2="1"><stop offset="0" stop-color="#f6f6f6"/><stop offset="1" stop-color="#e4e4e4"/></linearGradient></defs><path d="M0.5 21.5 V6.5 L5.5 0.5 H76.5 V21.5" fill="url(#tg9)" stroke="#b8b8b8" stroke-width="1"/></svg>
<div class="t" style="top:341px;left:762px;transform:scaleX(0.969);transform-origin:0 0;letter-spacing:-0.35px;">Obaveštenja</div>
<svg class="a" style="left:666px;top:336px" width="87.5" height="22" viewBox="0 0 87.5 22"><path d="M0.5 22 V6.5 L5.5 0.5 H87.0 V22" fill="#f3f3f3" stroke="#b8b8b8" stroke-width="1"/><path d="M3.6 3 L6 0 H87.5 V3Z" fill="#2b579a"/></svg>
<div class="t" style="top:341px;left:674.5px;transform:scaleX(0.968);transform-origin:0 0;letter-spacing:-0.35px;">Serijski brojevi</div>
<div class="a" style="left:212px;top:357.5px;width:1036px;height:1px;background:#c8c8c8"></div>
<svg class="a" style="left:213px;top:357.5px" width="146" height="20" viewBox="0 0 146 20"><path d="M0.5 20 V6.5 L5.5 0.5 H145.5 V20" fill="#f3f3f3" stroke="#b8b8b8" stroke-width="1"/><path d="M3.6 3 L6 0 H146 V3Z" fill="#2b579a"/></svg>
<div class="t" style="top:362px;left:220px;transform:scaleX(0.973);transform-origin:0 0;letter-spacing:-0.35px;">Proknjiženi serijski brojevi</div>
<div class="a" style="left:214.7px;top:377.5px;width:1032.8px;height:384px;background:#fff;border:1px solid #203f7d;box-shadow:inset 0 0 0 1px #6685bd"></div>
<div class="a" style="left:216px;top:379px;width:915px;height:20px;background:#f0f0f0;border-bottom:1px solid #9db9e4"></div>
<div class="a" style="left:307px;top:381px;width:1px;height:15px;background:#7aa0d8"></div>
<div class="a" style="left:337px;top:381px;width:1px;height:15px;background:#7aa0d8"></div>
<div class="a" style="left:386px;top:381px;width:1px;height:15px;background:#7aa0d8"></div>
<div class="a" style="left:612px;top:381px;width:1px;height:15px;background:#7aa0d8"></div>
<div class="a" style="left:736px;top:381px;width:1px;height:15px;background:#7aa0d8"></div>
<div class="a" style="left:800px;top:381px;width:1px;height:15px;background:#7aa0d8"></div>
<div class="a" style="left:864px;top:381px;width:1px;height:15px;background:#7aa0d8"></div>
<div class="a" style="left:928px;top:381px;width:1px;height:15px;background:#7aa0d8"></div>
<div class="a" style="left:1018px;top:381px;width:1px;height:15px;background:#7aa0d8"></div>
<div class="a" style="left:1130px;top:381px;width:1px;height:15px;background:#7aa0d8"></div>
<div class="t" style="top:382.2px;left:219px;letter-spacing:-0.11px;font-size:11.5px;">Broj naloga</div>
<div class="t" style="top:382.2px;left:311px;letter-spacing:0.12px;font-size:11.5px;">O...</div>
<div class="t" style="top:382.2px;left:341px;letter-spacing:-0.13px;font-size:11.5px;">Šifra</div>
<div class="t" style="top:382.2px;left:390px;letter-spacing:0.03px;font-size:11.5px;">Naziv artikla</div>
<div class="t" style="top:382.2px;left:616px;letter-spacing:0.2px;font-size:11.5px;">Serijski broj</div>
<div class="t" style="top:382.2px;left:740px;transform:scaleX(0.979);transform-origin:0 0;letter-spacing:-0.35px;font-size:11.5px;">Rok</div>
<div class="t" style="top:382.2px;left:804px;letter-spacing:-0.25px;font-size:11.5px;">Ulaz</div>
<div class="t" style="top:382.2px;left:868px;letter-spacing:0.07px;font-size:11.5px;">Izlaz</div>
<div class="t" style="top:382.2px;left:932px;letter-spacing:0.08px;font-size:11.5px;">Operater</div>
<div class="t" style="top:382.2px;left:1022px;letter-spacing:0.36px;font-size:11.5px;">Vreme izmene</div>
<div class="c" style="left:216px;top:399px;width:92px;height:18px;"></div>
<div class="c" style="left:308px;top:399px;width:30px;height:18px;background:#3b73c5;"></div>
<div class="c" style="left:338px;top:399px;width:49px;height:18px;background:#3b73c5;"></div>
<div class="c" style="left:387px;top:399px;width:226px;height:18px;background:#3b73c5;"></div>
<div class="c" style="left:613px;top:399px;width:124px;height:18px;background:#3b73c5;"></div>
<div class="c" style="left:737px;top:399px;width:64px;height:18px;background:#3b73c5;"></div>
<div class="c" style="left:801px;top:399px;width:64px;height:18px;background:#3b73c5;"></div>
<div class="c" style="left:865px;top:399px;width:64px;height:18px;background:#3b73c5;"></div>
<div class="c" style="left:929px;top:399px;width:90px;height:18px;background:#3b73c5;"></div>
<div class="c" style="left:1019px;top:399px;width:112px;height:18px;background:#3b73c5;"></div>
<div class="t" style="top:400px;left:217px;letter-spacing:-0.25px;font-size:11px;">PL005-0009</div>
<div class="t" style="top:400px;left:316.3px;letter-spacing:0.05px;font-size:11px;color:#fff;">005</div>
<div class="t" style="top:400px;left:347.5px;letter-spacing:-0.05px;font-size:11px;color:#fff;">009182</div>
<div class="t" style="top:400px;left:388.2px;transform:scaleX(0.943);transform-origin:0 0;letter-spacing:-0.35px;font-size:11px;color:#fff;">TEST SERIJSKI BROJEVI</div>
<div class="t" style="top:400px;left:615px;letter-spacing:0.08px;font-size:11px;color:#fff;">12</div>
<div class="t" style="top:400px;left:833.9000000000001px;letter-spacing:-0.05px;font-size:11px;color:#fff;">0,000</div>
<div class="t" style="top:400px;left:898px;letter-spacing:-0.05px;font-size:11px;color:#fff;">0,000</div>
<div class="t" style="top:400px;left:931px;transform:scaleX(0.880);transform-origin:0 0;letter-spacing:-0.35px;font-size:11px;color:#fff;">OPER</div>
<div class="t" style="top:400px;left:1020.8px;letter-spacing:0.14px;font-size:11px;color:#fff;">09.01.24 12:33:15</div>
<div class="a" style="left:216px;top:398.5px;width:92px;height:17.5px;border:1px dotted #222"></div>
<div class="c" style="left:216px;top:417px;width:92px;height:18px;"></div>
<div class="c" style="left:308px;top:417px;width:30px;height:18px;"></div>
<div class="c" style="left:338px;top:417px;width:49px;height:18px;"></div>
<div class="c" style="left:387px;top:417px;width:226px;height:18px;"></div>
<div class="c" style="left:613px;top:417px;width:124px;height:18px;"></div>
<div class="c" style="left:737px;top:417px;width:64px;height:18px;"></div>
<div class="c" style="left:801px;top:417px;width:64px;height:18px;"></div>
<div class="c" style="left:865px;top:417px;width:64px;height:18px;"></div>
<div class="c" style="left:929px;top:417px;width:90px;height:18px;"></div>
<div class="c" style="left:1019px;top:417px;width:112px;height:18px;"></div>
<div class="t" style="top:418px;left:217px;letter-spacing:-0.18px;font-size:11px;">PL005-0009-0</div>
<div class="t" style="top:418px;left:316.3px;letter-spacing:0.05px;font-size:11px;color:#000;">005</div>
<div class="t" style="top:418px;left:347.5px;letter-spacing:-0.05px;font-size:11px;color:#000;">009182</div>
<div class="t" style="top:418px;left:388.2px;transform:scaleX(0.943);transform-origin:0 0;letter-spacing:-0.35px;font-size:11px;color:#000;">TEST SERIJSKI BROJEVI</div>
<div class="t" style="top:418px;left:615px;letter-spacing:0.08px;font-size:11px;color:#000;">12</div>
<div class="t" style="top:418px;left:830.2px;letter-spacing:-0.03px;font-size:11px;color:#000;">-5,000</div>
<div class="t" style="top:418px;left:898px;letter-spacing:-0.05px;font-size:11px;color:#000;">0,000</div>
<div class="t" style="top:418px;left:931px;transform:scaleX(0.880);transform-origin:0 0;letter-spacing:-0.35px;font-size:11px;color:#000;">OPER</div>
<div class="t" style="top:418px;left:1020.8px;letter-spacing:0.14px;font-size:11px;color:#000;">09.01.24 12:33:15</div>
<div class="c" style="left:216px;top:435px;width:92px;height:18px;"></div>
<div class="c" style="left:308px;top:435px;width:30px;height:18px;"></div>
<div class="c" style="left:338px;top:435px;width:49px;height:18px;"></div>
<div class="c" style="left:387px;top:435px;width:226px;height:18px;"></div>
<div class="c" style="left:613px;top:435px;width:124px;height:18px;"></div>
<div class="c" style="left:737px;top:435px;width:64px;height:18px;"></div>
<div class="c" style="left:801px;top:435px;width:64px;height:18px;"></div>
<div class="c" style="left:865px;top:435px;width:64px;height:18px;"></div>
<div class="c" style="left:929px;top:435px;width:90px;height:18px;"></div>
<div class="c" style="left:1019px;top:435px;width:112px;height:18px;"></div>
<div class="t" style="top:436px;left:217px;letter-spacing:-0.25px;font-size:11px;">PL005-0009</div>
<div class="t" style="top:436px;left:316.3px;letter-spacing:0.05px;font-size:11px;color:#000;">005</div>
<div class="t" style="top:436px;left:347.5px;letter-spacing:-0.05px;font-size:11px;color:#000;">009182</div>
<div class="t" style="top:436px;left:388.2px;transform:scaleX(0.943);transform-origin:0 0;letter-spacing:-0.35px;font-size:11px;color:#000;">TEST SERIJSKI BROJEVI</div>
<div class="t" style="top:436px;left:615px;letter-spacing:0.08px;font-size:11px;color:#000;">13</div>
<div class="t" style="top:436px;left:833.9000000000001px;letter-spacing:-0.05px;font-size:11px;color:#000;">4,000</div>
<div class="t" style="top:436px;left:898px;letter-spacing:-0.05px;font-size:11px;color:#000;">0,000</div>
<div class="t" style="top:436px;left:931px;transform:scaleX(0.880);transform-origin:0 0;letter-spacing:-0.35px;font-size:11px;color:#000;">OPER</div>
<div class="t" style="top:436px;left:1020.8px;letter-spacing:0.14px;font-size:11px;color:#000;">09.01.24 12:33:15</div>
<div class="c" style="left:216px;top:453px;width:92px;height:18px;"></div>
<div class="c" style="left:308px;top:453px;width:30px;height:18px;"></div>
<div class="c" style="left:338px;top:453px;width:49px;height:18px;"></div>
<div class="c" style="left:387px;top:453px;width:226px;height:18px;"></div>
<div class="c" style="left:613px;top:453px;width:124px;height:18px;"></div>
<div class="c" style="left:737px;top:453px;width:64px;height:18px;"></div>
<div class="c" style="left:801px;top:453px;width:64px;height:18px;"></div>
<div class="c" style="left:865px;top:453px;width:64px;height:18px;"></div>
<div class="c" style="left:929px;top:453px;width:90px;height:18px;"></div>
<div class="c" style="left:1019px;top:453px;width:112px;height:18px;"></div>
<div class="t" style="top:454px;left:217px;letter-spacing:-0.18px;font-size:11px;">PL005-0009-0</div>
<div class="t" style="top:454px;left:316.3px;letter-spacing:0.05px;font-size:11px;color:#000;">005</div>
<div class="t" style="top:454px;left:347.5px;letter-spacing:-0.05px;font-size:11px;color:#000;">009182</div>
<div class="t" style="top:454px;left:388.2px;transform:scaleX(0.943);transform-origin:0 0;letter-spacing:-0.35px;font-size:11px;color:#000;">TEST SERIJSKI BROJEVI</div>
<div class="t" style="top:454px;left:615px;letter-spacing:0.08px;font-size:11px;color:#000;">13</div>
<div class="t" style="top:454px;left:830.2px;letter-spacing:-0.03px;font-size:11px;color:#000;">-4,000</div>
<div class="t" style="top:454px;left:898px;letter-spacing:-0.05px;font-size:11px;color:#000;">0,000</div>
<div class="t" style="top:454px;left:931px;transform:scaleX(0.880);transform-origin:0 0;letter-spacing:-0.35px;font-size:11px;color:#000;">OPER</div>
<div class="t" style="top:454px;left:1020.8px;letter-spacing:0.14px;font-size:11px;color:#000;">09.01.24 12:33:15</div>
<div class="c" style="left:216px;top:471px;width:92px;height:18px;"></div>
<div class="c" style="left:308px;top:471px;width:30px;height:18px;"></div>
<div class="c" style="left:338px;top:471px;width:49px;height:18px;"></div>
<div class="c" style="left:387px;top:471px;width:226px;height:18px;"></div>
<div class="c" style="left:613px;top:471px;width:124px;height:18px;"></div>
<div class="c" style="left:737px;top:471px;width:64px;height:18px;"></div>
<div class="c" style="left:801px;top:471px;width:64px;height:18px;"></div>
<div class="c" style="left:865px;top:471px;width:64px;height:18px;"></div>
<div class="c" style="left:929px;top:471px;width:90px;height:18px;"></div>
<div class="c" style="left:1019px;top:471px;width:112px;height:18px;"></div>
<div class="t" style="top:472px;left:217px;letter-spacing:-0.25px;font-size:11px;">PL005-0009</div>
<div class="t" style="top:472px;left:316.3px;letter-spacing:0.05px;font-size:11px;color:#000;">005</div>
<div class="t" style="top:472px;left:347.5px;letter-spacing:-0.05px;font-size:11px;color:#000;">009182</div>
<div class="t" style="top:472px;left:388.2px;transform:scaleX(0.943);transform-origin:0 0;letter-spacing:-0.35px;font-size:11px;color:#000;">TEST SERIJSKI BROJEVI</div>
<div class="t" style="top:472px;left:615px;letter-spacing:-0.19px;font-size:11px;color:#000;">654</div>
<div class="t" style="top:472px;left:833.9000000000001px;letter-spacing:-0.05px;font-size:11px;color:#000;">7,000</div>
<div class="t" style="top:472px;left:898px;letter-spacing:-0.05px;font-size:11px;color:#000;">0,000</div>
<div class="t" style="top:472px;left:931px;transform:scaleX(0.880);transform-origin:0 0;letter-spacing:-0.35px;font-size:11px;color:#000;">OPER</div>
<div class="t" style="top:472px;left:1020.8px;letter-spacing:0.14px;font-size:11px;color:#000;">09.01.24 12:33:15</div>
<div class="c" style="left:216px;top:489px;width:92px;height:18px;"></div>
<div class="c" style="left:308px;top:489px;width:30px;height:18px;"></div>
<div class="c" style="left:338px;top:489px;width:49px;height:18px;"></div>
<div class="c" style="left:387px;top:489px;width:226px;height:18px;"></div>
<div class="c" style="left:613px;top:489px;width:124px;height:18px;"></div>
<div class="c" style="left:737px;top:489px;width:64px;height:18px;"></div>
<div class="c" style="left:801px;top:489px;width:64px;height:18px;"></div>
<div class="c" style="left:865px;top:489px;width:64px;height:18px;"></div>
<div class="c" style="left:929px;top:489px;width:90px;height:18px;"></div>
<div class="c" style="left:1019px;top:489px;width:112px;height:18px;"></div>
<div class="t" style="top:490px;left:217px;letter-spacing:-0.18px;font-size:11px;">PL005-0009-0</div>
<div class="t" style="top:490px;left:316.3px;letter-spacing:0.05px;font-size:11px;color:#000;">005</div>
<div class="t" style="top:490px;left:347.5px;letter-spacing:-0.05px;font-size:11px;color:#000;">009182</div>
<div class="t" style="top:490px;left:388.2px;transform:scaleX(0.943);transform-origin:0 0;letter-spacing:-0.35px;font-size:11px;color:#000;">TEST SERIJSKI BROJEVI</div>
<div class="t" style="top:490px;left:615px;letter-spacing:-0.19px;font-size:11px;color:#000;">654</div>
<div class="t" style="top:490px;left:830.2px;letter-spacing:-0.03px;font-size:11px;color:#000;">-2,000</div>
<div class="t" style="top:490px;left:898px;letter-spacing:-0.05px;font-size:11px;color:#000;">0,000</div>
<div class="t" style="top:490px;left:931px;transform:scaleX(0.880);transform-origin:0 0;letter-spacing:-0.35px;font-size:11px;color:#000;">OPER</div>
<div class="t" style="top:490px;left:1020.8px;letter-spacing:0.14px;font-size:11px;color:#000;">09.01.24 12:33:15</div>
<div class="a" style="left:215px;top:714px;width:916px;height:27px;background:#e2e2e2;border:1px solid #8aa6d6"></div>
<div class="a" style="left:802px;top:718px;width:61px;height:19px;background:#f0f0f0;border:1px solid #7d9fd6"></div>
<div class="a" style="left:866px;top:718px;width:61px;height:19px;background:#f0f0f0;border:1px solid #7d9fd6"></div>
<div class="t" style="top:720px;left:832.5px;letter-spacing:-0.05px;font-size:11px;">0,000</div>
<div class="t" style="top:720px;left:896.5px;letter-spacing:-0.05px;font-size:11px;">0,000</div>
<div class="a" style="left:215px;top:742px;width:1031px;height:18px;background:#f0f0f0"></div>
<div class="a" style="left:520px;top:742px;width:48px;height:18px;background:#f6f6f6"></div>
<div class="a" style="left:216.5px;top:742px;width:14.6px;height:17px;background:#eaeaea"></div>
<svg class="a" style="left:215.8px;top:742px" width="16" height="17" viewBox="0 0 16 17"><path d="M3.2 5v7" stroke="#a6a6a6" stroke-width="1.5"/><path d="M8.7 5v7l-4.2-3.5zM13.2 5v7l-4.2-3.5z" fill="#a6a6a6"/></svg>
<div class="a" style="left:233.5px;top:742px;width:14.6px;height:17px;background:#eaeaea"></div>
<svg class="a" style="left:232.8px;top:742px" width="16" height="17" viewBox="0 0 16 17"><path d="M8 5v7l-4.2-3.5zM12.5 5v7l-4.2-3.5z" fill="#a6a6a6"/></svg>
<div class="a" style="left:250.4px;top:742px;width:14.6px;height:17px;background:#eaeaea"></div>
<svg class="a" style="left:249.7px;top:742px" width="16" height="17" viewBox="0 0 16 17"><path d="M9.8 5v7l-4.2-3.5z" fill="#a6a6a6"/></svg>
<div class="a" style="left:266.4px;top:742px;width:50.9px;height:17px;background:#fff"></div>
<div class="t" style="top:742.5px;left:273.58px;letter-spacing:-0.09px;">1 od 6</div>
<div class="a" style="left:318.3px;top:742px;width:14.6px;height:17px;background:#e0e0e0"></div>
<svg class="a" style="left:317.6px;top:742px" width="16" height="17" viewBox="0 0 16 17"><path d="M6.2 5v7l4.2-3.5z" fill="#1a1a1a"/></svg>
<div class="a" style="left:335.2px;top:742px;width:14.6px;height:17px;background:#e0e0e0"></div>
<svg class="a" style="left:334.5px;top:742px" width="16" height="17" viewBox="0 0 16 17"><path d="M3.7 5v7l4.2-3.5zM8.2 5v7l4.2-3.5z" fill="#1a1a1a"/></svg>
<div class="a" style="left:352.2px;top:742px;width:14.6px;height:17px;background:#e0e0e0"></div>
<svg class="a" style="left:351.5px;top:742px" width="16" height="17" viewBox="0 0 16 17"><path d="M3 5v7l4.2-3.5zM7.5 5v7l4.2-3.5z" fill="#1a1a1a"/><path d="M13 5v7" stroke="#1a1a1a" stroke-width="1.5"/></svg>
<div class="a" style="left:369.1px;top:742px;width:14.6px;height:17px;background:#eaeaea"></div>
<svg class="a" style="left:368.4px;top:742px" width="16" height="17" viewBox="0 0 16 17"><path d="M8 3.8v9.6M3.2 8.6h9.6" stroke="#a0a0a0" stroke-width="2.6"/></svg>
<div class="a" style="left:386.1px;top:742px;width:14.6px;height:17px;background:#eaeaea"></div>
<svg class="a" style="left:385.4px;top:742px" width="16" height="17" viewBox="0 0 16 17"><path d="M3.6 8.6h8.8" stroke="#a0a0a0" stroke-width="2.2"/></svg>
<div class="a" style="left:403.1px;top:742px;width:14.6px;height:17px;background:#eaeaea"></div>
<svg class="a" style="left:402.4px;top:742px" width="16" height="17" viewBox="0 0 16 17"><path d="M8 5.8l3.8 4.6h-7.6z" fill="#8c8c8c"/></svg>
<div class="a" style="left:420.0px;top:742px;width:14.6px;height:17px;background:#eaeaea"></div>
<svg class="a" style="left:419.3px;top:742px" width="16" height="17" viewBox="0 0 16 17"><path d="M3.5 9l3 3.5 6-7.5" fill="none" stroke="#a8a8a8" stroke-width="1.6"/></svg>
<div class="a" style="left:437.0px;top:742px;width:14.6px;height:17px;background:#eaeaea"></div>
<svg class="a" style="left:436.3px;top:742px" width="16" height="17" viewBox="0 0 16 17"><path d="M4.8 5.3l6.4 6.4M11.2 5.3l-6.4 6.4" stroke="#a0a0a0" stroke-width="1.5"/></svg>
<div class="a" style="left:453.9px;top:742px;width:14.6px;height:17px;background:#e0e0e0"></div>
<svg class="a" style="left:453.2px;top:742px" width="16" height="17" viewBox="0 0 16 17"><path d="M3.3 12.5 V9.6 C3.3 7.6 4.8 6.9 6.3 6.9 H9" fill="none" stroke="#111" stroke-width="2.2"/><path d="M8.5 3.2l5 3.7-5 3.7z" fill="#111"/></svg>
<div class="a" style="left:470.9px;top:742px;width:14.6px;height:17px;background:#e0e0e0"></div>
<svg class="a" style="left:470.2px;top:742px" width="16" height="17" viewBox="0 0 16 17"><g stroke="#111" stroke-width="1.7"><path d="M8 3.8v9.6M3.2 8.6h9.6M4.6 5.2l6.8 6.8M11.4 5.2l-6.8 6.8"/></g></svg>
<div class="a" style="left:487.9px;top:742px;width:14.6px;height:17px;background:#eaeaea"></div>
<svg class="a" style="left:487.2px;top:742px" width="16" height="17" viewBox="0 0 16 17"><g stroke="#555" stroke-width="1.2"><path d="M8.8 4.6v8.6M4.5 8.9h8.6M5.8 5.9l6 6M11.8 5.9l-6 6"/></g><path d="M2.6 3.4l1.3 2.2" stroke="#333" stroke-width="1.2"/></svg>
<div class="a" style="left:504.8px;top:742px;width:14.6px;height:17px;background:#e0e0e0"></div>
<svg class="a" style="left:504.1px;top:742px" width="16" height="17" viewBox="0 0 16 17"><path d="M2.8 3.6h10.4l-3.8 4.8v5.4l-2.8-1.4v-4z" fill="#f08010"/></svg>
<svg class="a" style="left:576px;top:746px" width="6" height="9" viewBox="0 0 6 9"><path d="M5.2 0.8 L1.2 4.5 L5.2 8.2" fill="none" stroke="#c2c2c2" stroke-width="1.9"/></svg>
<svg class="a" style="left:1234px;top:746px" width="6" height="9" viewBox="0 0 6 9"><path d="M0.8 0.8 L4.8 4.5 L0.8 8.2" fill="none" stroke="#c2c2c2" stroke-width="1.9"/></svg>
<div class="a" style="left:213.5px;top:763.6px;width:256px;height:23.5px;background:linear-gradient(#fbfbfb,#e9e9e9);border:1px solid #cfcfcf;box-shadow:inset 1px 1px 0 #fff"></div>
<div class="t" style="top:767px;left:290.8px;letter-spacing:-0.22px;font-size:11.5px;">F1 - Pretraga po šifri</div>
<div class="a" style="left:472.5px;top:763.6px;width:256px;height:23.5px;background:linear-gradient(#fbfbfb,#e9e9e9);border:1px solid #cfcfcf;box-shadow:inset 1px 1px 0 #fff"></div>
<div class="t" style="top:767px;left:539.2px;letter-spacing:-0.28px;font-size:11.5px;">F6 - Pretraga po barkodu</div>
<div class="a" style="left:731.5px;top:763.6px;width:256px;height:23.5px;background:linear-gradient(#fbfbfb,#e9e9e9);border:1px solid #cfcfcf;box-shadow:inset 1px 1px 0 #fff"></div>
<div class="t" style="top:767px;left:802.6px;letter-spacing:-0.31px;font-size:11.5px;">F7 - Pretraga po nazivu</div>
<div class="a" style="left:990.5px;top:763.6px;width:256px;height:23.5px;background:linear-gradient(#fbfbfb,#e9e9e9);border:1px solid #cfcfcf;box-shadow:inset 1px 1px 0 #fff"></div>
<div class="t" style="top:767px;left:1084.9px;letter-spacing:-0.29px;font-size:11.5px;">F9 - Svi artikli</div>
<div class="a" style="left:213px;top:788.5px;width:1034px;height:29px;background:linear-gradient(#fafafa,#e9e9e9);border:1px solid #cfcfcf;box-shadow:inset 1px 1px 0 #fff"></div>
<div class="btn" style="left:215.5px;top:791.5px;width:98.2px;height:23.5px"></div>
<div class="t" style="top:795px;left:221.6px;letter-spacing:-0.17px;">F5 - Novi popis</div>
<div class="btn" style="left:318.4px;top:791.5px;width:78.9px;height:23.5px"></div>
<div class="t" style="top:795px;left:324.6px;letter-spacing:-0.17px;">Obriši popis</div>
<div class="btn" style="left:401.7px;top:791.5px;width:79.3px;height:23.5px"></div>
<div class="t" style="top:795px;left:405.7px;letter-spacing:-0.26px;">Obriši stavke</div>
<div class="btn" style="left:486.5px;top:791.5px;width:78.9px;height:23.5px"></div>
<div class="t" style="top:795px;left:492.7px;letter-spacing:-0.18px;">Dodaj izost.</div>
<div class="btn" style="left:570.0px;top:791.5px;width:83.8px;height:23.5px"></div>
<div class="t" style="top:795px;left:574.9px;letter-spacing:-0.3px;">Svedi količine</div>
<div class="btn" style="left:659.3px;top:791.5px;width:84.3px;height:23.5px"></div>
<div class="t" style="top:795px;left:662.9px;letter-spacing:-0.07px;">Data terminal</div>
<div class="btn" style="left:749.0px;top:791.5px;width:38.3px;height:23.5px"></div>
<div class="t" style="top:795px;left:758.2px;transform:scaleX(0.904);transform-origin:0 0;letter-spacing:-0.35px;">LBs</div>
<div class="btn" style="left:792.8px;top:791.5px;width:38.2px;height:23.5px"></div>
<div class="t" style="top:795px;left:801.5px;transform:scaleX(0.874);transform-origin:0 0;letter-spacing:-0.35px;">LBn</div>
<div class="a" style="left:1018.5px;top:123.5px;width:228px;height:68px;border:1px solid #d6d6d6;box-shadow:inset 1px 1px 0 #fff,1px 1px 0 #fff"></div><div class="a" style="left:1023.4000000000001px;top:117.5px;width:111.2px;height:12px;background:#f0f0f0"></div><div class="t" style="top:115.5px;left:1025.4px;transform:scaleX(0.971);transform-origin:0 0;letter-spacing:-0.35px;">Obrada popisnih listi</div>
<div class="a" style="left:1018.5px;top:204.8px;width:228px;height:129px;border:1px solid #d6d6d6;box-shadow:inset 1px 1px 0 #fff,1px 1px 0 #fff"></div><div class="a" style="left:1023.4000000000001px;top:198.8px;width:115px;height:12px;background:#f0f0f0"></div><div class="t" style="top:196.8px;left:1025.4px;transform:scaleX(0.976);transform-origin:0 0;letter-spacing:-0.35px;">Štampa popisne liste</div>
<div class="a" style="left:1024.6px;top:279.8px;width:217px;height:45.5px;border:1px solid #d6d6d6;box-shadow:inset 1px 1px 0 #fff,1px 1px 0 #fff"></div><div class="a" style="left:1029.6px;top:273.8px;width:43.6px;height:12px;background:#f0f0f0"></div><div class="t" style="top:271.8px;left:1031.6px;letter-spacing:-0.33px;">Sort po</div>
<div class="btn" style="left:1026.7px;top:132.8px;width:101.3px;height:22px;background:#cfcfcf;box-shadow:none;border-color:#c2c2c2"></div><div class="t" style="top:137.3px;left:1059.3px;letter-spacing:-0.04px;color:#fff;">Kreiraj</div><div class="t" style="top:136.3px;left:1058.3px;letter-spacing:-0.04px;color:#9a9a9a;">Kreiraj</div>
<div class="btn" style="left:1130.2px;top:132.8px;width:100.6px;height:22px;background:#e1e1e1"></div><div class="t" style="top:136.3px;left:1155.3px;letter-spacing:0.14px;">Formiraj</div>
<div class="btn" style="left:1026.7px;top:161px;width:101.3px;height:22px;background:#e1e1e1"></div><div class="t" style="top:164.5px;left:1053.5px;letter-spacing:0.08px;">Arhiviraj</div>
<div class="btn" style="left:1130.2px;top:161px;width:100.6px;height:22px;background:#e1e1e1"></div><div class="t" style="top:164.5px;left:1142.4px;letter-spacing:-0.2px;">Prikaži arhivu</div>
<div class="btn" style="left:1024.6px;top:216.6px;width:87.8px;height:22px;background:#e1e1e1"></div><div class="t" style="top:220.1px;left:1048.4px;transform:scaleX(0.969);transform-origin:0 0;letter-spacing:-0.35px;">Prazna</div>
<div class="btn" style="left:1115.2px;top:216.6px;width:126.3px;height:22px;background:#e1e1e1"></div><div class="t" style="top:220.1px;left:1128.4px;letter-spacing:-0.06px;">Samo sa stanjem</div>
<div class="btn" style="left:1024.6px;top:246.6px;width:87.8px;height:22px;background:#e1e1e1"></div><div class="t" style="top:250.1px;left:1038px;letter-spacing:-0.26px;">Kompletna</div>
<div class="btn" style="left:1115.2px;top:246.6px;width:126.3px;height:22px;background:#e1e1e1"></div><div class="t" style="top:250.1px;left:1128.4px;letter-spacing:-0.24px;">Razlike po popisu</div>
<div class="a" style="left:1028.7px;top:289.2px;width:12px;height:12px;border-radius:6px;background:#fff;border:1px solid #222"></div><div class="a" style="left:1032.2px;top:292.7px;width:5px;height:5px;border-radius:3px;background:#111"></div>
<div class="t" style="top:287.5px;left:1046.5px;transform:scaleX(0.911);transform-origin:0 0;letter-spacing:-0.35px;">Šifri</div>
<div class="a" style="left:1114.8px;top:289.2px;width:12px;height:12px;border-radius:6px;background:#fff;border:1px solid #222"></div>
<div class="t" style="top:287.5px;left:1132.6px;transform:scaleX(0.933);transform-origin:0 0;letter-spacing:-0.35px;">Nazivu artikla</div>
<div class="a" style="left:1028.7px;top:308.8px;width:12px;height:12px;border-radius:6px;background:#fff;border:1px solid #222"></div>
<div class="t" style="top:307px;left:1046.5px;transform:scaleX(0.946);transform-origin:0 0;letter-spacing:-0.35px;">Rbr stavke</div>
<div class="a" style="left:1114.8px;top:308.8px;width:12px;height:12px;border-radius:6px;background:#fff;border:1px solid #222"></div>
<div class="t" style="top:307px;left:1132.6px;transform:scaleX(0.913);transform-origin:0 0;letter-spacing:-0.35px;">%PDV</div>
<div class="a" style="left:1176.6px;top:309.5px;width:12px;height:12px;border-radius:6px;background:#fff;border:1px solid #222"></div>
<div class="t" style="top:307.5px;left:1194.3px;letter-spacing:-0.23px;">Kat.br.</div>
<svg class="a" style="left:1250px;top:91px" width="43" height="25" viewBox="0 0 43 25"><defs><linearGradient id="tg12" x1="0" y1="0" x2="0" y2="1"><stop offset="0" stop-color="#f6f6f6"/><stop offset="1" stop-color="#e4e4e4"/></linearGradient></defs><path d="M0.5 25 V6.5 L5.5 0.5 H42.5 V25" fill="url(#tg12)" stroke="#b8b8b8" stroke-width="1"/></svg>
<div class="t" style="top:97px;left:1256.3px;transform:scaleX(0.916);transform-origin:0 0;letter-spacing:-0.35px;">Planer</div>
<svg class="a" style="left:1329px;top:91px" width="67" height="25" viewBox="0 0 67 25"><defs><linearGradient id="tg13" x1="0" y1="0" x2="0" y2="1"><stop offset="0" stop-color="#f6f6f6"/><stop offset="1" stop-color="#e4e4e4"/></linearGradient></defs><path d="M0.5 25 V6.5 L5.5 0.5 H66.5 V25" fill="url(#tg13)" stroke="#b8b8b8" stroke-width="1"/></svg>
<div class="t" style="top:97px;left:1335px;transform:scaleX(0.982);transform-origin:0 0;letter-spacing:-0.35px;">Za štampu</div>
<svg class="a" style="left:1398px;top:91px" width="50" height="25" viewBox="0 0 50 25"><defs><linearGradient id="tg14" x1="0" y1="0" x2="0" y2="1"><stop offset="0" stop-color="#f6f6f6"/><stop offset="1" stop-color="#e4e4e4"/></linearGradient></defs><path d="M0.5 25 V6.5 L5.5 0.5 H49.5 V25" fill="url(#tg14)" stroke="#b8b8b8" stroke-width="1"/></svg>
<div class="t" style="top:97px;left:1405.2px;transform:scaleX(0.988);transform-origin:0 0;letter-spacing:-0.35px;">Tajmeri</div>
<svg class="a" style="left:1295px;top:90px" width="32" height="26" viewBox="0 0 32 26"><path d="M0.5 26 V6.5 L5.5 0.5 H31.5 V26" fill="#f3f3f3" stroke="#b8b8b8" stroke-width="1"/><path d="M3.6 3 L6 0 H32 V3Z" fill="#2b579a"/></svg>
<div class="t" style="top:97px;left:1301.4px;letter-spacing:-0.05px;">Info</div>
<div class="a" style="left:1250px;top:116px;width:207px;height:680px;background:#fff"></div>
<div class="a" style="left:1250px;top:116px;width:207px;height:21px;background:#e8e8e8;border-bottom:2px solid #7aa0d8"></div>
<div class="t" style="top:120px;left:1252.5px;transform:scaleX(0.883);transform-origin:0 0;letter-spacing:-0.35px;font-size:12px;">1 - PODACI O ENTITETU</div>
<div class="a" style="left:1250px;top:191px;width:207px;height:20px;background:#e8e8e8;border-bottom:2px solid #7aa0d8"></div>
<div class="t" style="top:194px;left:1252.5px;transform:scaleX(0.943);transform-origin:0 0;letter-spacing:-0.35px;font-size:12px;color:#3d6cc0;">9 - STATISTIKA ENTITETA - 31.12.23</div>
<div class="a" style="left:1250px;top:137px;width:104px;height:18px;border-right:1px solid #b5b5b5;border-bottom:1px solid #b5b5b5"></div><div class="a" style="left:1354px;top:137px;width:103px;height:18px;border-bottom:1px solid #b5b5b5"></div><div class="t" style="top:138px;left:1251.3px;letter-spacing:-0.33px;font-size:11.5px;">Šifra</div><div class="t" style="top:138px;left:1355.8px;transform:scaleX(0.976);transform-origin:0 0;letter-spacing:-0.35px;font-size:11.5px;">09182</div>
<div class="a" style="left:1250px;top:155px;width:104px;height:18px;border-right:1px solid #b5b5b5;border-bottom:1px solid #b5b5b5"></div><div class="a" style="left:1354px;top:155px;width:103px;height:18px;border-bottom:1px solid #b5b5b5"></div><div class="t" style="top:156px;left:1251.3px;transform:scaleX(0.944);transform-origin:0 0;letter-spacing:-0.35px;font-size:11.5px;">Naziv</div><div class="t" style="top:156px;left:1355.8px;transform:scaleX(0.929);transform-origin:0 0;letter-spacing:-0.35px;font-size:11.5px;">TEST SERIJSKI B...</div>
<div class="a" style="left:1250px;top:173px;width:104px;height:18px;border-right:1px solid #b5b5b5;border-bottom:1px solid #b5b5b5"></div><div class="a" style="left:1354px;top:173px;width:103px;height:18px;border-bottom:1px solid #b5b5b5"></div><div class="t" style="top:174px;left:1251.3px;transform:scaleX(0.993);transform-origin:0 0;letter-spacing:-0.35px;font-size:11.5px;">Jed.mere</div><div class="t" style="top:174px;left:1355.8px;transform:scaleX(0.851);transform-origin:0 0;letter-spacing:-0.35px;font-size:11.5px;">KOM</div>
<div class="a" style="left:1250px;top:211px;width:104px;height:18px;border-right:1px solid #b5b5b5;border-bottom:1px solid #b5b5b5"></div><div class="a" style="left:1354px;top:211px;width:103px;height:18px;border-bottom:1px solid #b5b5b5"></div><div class="t" style="top:213px;left:1251.3px;letter-spacing:-0.35px;font-size:11.5px;">Proknjiženo stanje</div><div class="t" style="top:213px;left:1427.7px;transform:scaleX(0.974);transform-origin:0 0;letter-spacing:-0.35px;font-size:11.5px;">11,00</div>
<div class="a" style="left:1250px;top:229px;width:104px;height:18px;border-right:1px solid #b5b5b5;border-bottom:1px solid #b5b5b5"></div><div class="a" style="left:1354px;top:229px;width:103px;height:18px;border-bottom:1px solid #b5b5b5"></div><div class="t" style="top:231px;left:1251.3px;transform:scaleX(0.993);transform-origin:0 0;letter-spacing:-0.35px;font-size:11.5px;color:#8b1a2b;">Raspoloživo stanje</div><div class="t" style="top:231px;left:1427.7px;transform:scaleX(0.974);transform-origin:0 0;letter-spacing:-0.35px;font-size:11.5px;color:#8b1a2b;">11,00</div>
<div class="a" style="left:1250px;top:247px;width:104px;height:18px;border-right:1px solid #b5b5b5;border-bottom:1px solid #b5b5b5"></div><div class="a" style="left:1354px;top:247px;width:103px;height:18px;border-bottom:1px solid #b5b5b5"></div><div class="t" style="top:249px;left:1251.3px;letter-spacing:-0.35px;font-size:11.5px;">Fakturna cena</div><div class="t" style="top:249px;left:1433.7px;transform:scaleX(0.929);transform-origin:0 0;letter-spacing:-0.35px;font-size:11.5px;">1,00</div>
<div class="a" style="left:1250px;top:265px;width:104px;height:18px;border-right:1px solid #b5b5b5;border-bottom:1px solid #b5b5b5"></div><div class="a" style="left:1354px;top:265px;width:103px;height:18px;border-bottom:1px solid #b5b5b5"></div><div class="t" style="top:267px;left:1251.3px;letter-spacing:-0.31px;font-size:11.5px;">Zadnja nab.cena</div><div class="t" style="top:267px;left:1433.7px;transform:scaleX(0.929);transform-origin:0 0;letter-spacing:-0.35px;font-size:11.5px;">1,00</div>
<div class="a" style="left:1250px;top:283px;width:104px;height:18px;border-right:1px solid #b5b5b5;border-bottom:1px solid #b5b5b5"></div><div class="a" style="left:1354px;top:283px;width:103px;height:18px;border-bottom:1px solid #b5b5b5"></div><div class="t" style="top:285px;left:1251.3px;transform:scaleX(0.984);transform-origin:0 0;letter-spacing:-0.35px;font-size:11.5px;">Prosečna nab.cena</div><div class="t" style="top:285px;left:1419.7px;letter-spacing:-0.28px;font-size:11.5px;">900,10</div>
<div class="a" style="left:1250px;top:301px;width:104px;height:18px;border-right:1px solid #b5b5b5;border-bottom:1px solid #b5b5b5"></div><div class="a" style="left:1354px;top:301px;width:103px;height:18px;border-bottom:1px solid #b5b5b5"></div><div class="t" style="top:303px;left:1251.3px;transform:scaleX(0.918);transform-origin:0 0;letter-spacing:-0.35px;font-size:11.5px;">Cena bez PDV</div><div class="t" style="top:303px;left:1433.7px;transform:scaleX(0.929);transform-origin:0 0;letter-spacing:-0.35px;font-size:11.5px;">1,00</div>
<div class="a" style="left:1250px;top:319px;width:104px;height:18px;border-right:1px solid #b5b5b5;border-bottom:1px solid #b5b5b5"></div><div class="a" style="left:1354px;top:319px;width:103px;height:18px;border-bottom:1px solid #b5b5b5"></div><div class="t" style="top:321px;left:1251.3px;transform:scaleX(0.927);transform-origin:0 0;letter-spacing:-0.35px;font-size:11.5px;color:#8b1a2b;">Cena sa PDV</div><div class="t" style="top:321px;left:1433.7px;transform:scaleX(0.929);transform-origin:0 0;letter-spacing:-0.35px;font-size:11.5px;color:#8b1a2b;">1,20</div>
<div class="a" style="left:1250px;top:337px;width:104px;height:18px;border-right:1px solid #b5b5b5;border-bottom:1px solid #b5b5b5"></div><div class="a" style="left:1354px;top:337px;width:103px;height:18px;border-bottom:1px solid #b5b5b5"></div><div class="t" style="top:339px;left:1251.3px;transform:scaleX(0.909);transform-origin:0 0;letter-spacing:-0.35px;font-size:11.5px;">%RUC NBC</div><div class="t" style="top:339px;left:1422.2px;letter-spacing:-0.27px;font-size:11.5px;">-99,89</div>
<div class="a" style="left:1250px;top:355px;width:104px;height:18px;border-right:1px solid #b5b5b5;border-bottom:1px solid #b5b5b5"></div><div class="a" style="left:1354px;top:355px;width:103px;height:18px;border-bottom:1px solid #b5b5b5"></div><div class="t" style="top:357px;left:1251.3px;transform:scaleX(0.901);transform-origin:0 0;letter-spacing:-0.35px;font-size:11.5px;">%RUC VPC</div><div class="t" style="top:357px;left:1399.9px;letter-spacing:-0.17px;font-size:11.5px;">-89.910,00</div>
<div class="a" style="left:1250px;top:373px;width:104px;height:18px;border-right:1px solid #b5b5b5;border-bottom:1px solid #b5b5b5"></div><div class="a" style="left:1354px;top:373px;width:103px;height:18px;border-bottom:1px solid #b5b5b5"></div><div class="t" style="top:375px;left:1251.3px;transform:scaleX(0.965);transform-origin:0 0;letter-spacing:-0.35px;font-size:11.5px;">Ukupno ulaz</div><div class="t" style="top:375px;left:1427.7px;transform:scaleX(0.974);transform-origin:0 0;letter-spacing:-0.35px;font-size:11.5px;">11,00</div>
<div class="a" style="left:1250px;top:391px;width:104px;height:18px;border-right:1px solid #b5b5b5;border-bottom:1px solid #b5b5b5"></div><div class="a" style="left:1354px;top:391px;width:103px;height:18px;border-bottom:1px solid #b5b5b5"></div><div class="t" style="top:393px;left:1251.3px;transform:scaleX(0.965);transform-origin:0 0;letter-spacing:-0.35px;font-size:11.5px;">Ukupno izlaz</div><div class="t" style="top:393px;left:1433.7px;transform:scaleX(0.929);transform-origin:0 0;letter-spacing:-0.35px;font-size:11.5px;">0,00</div>
<div class="a" style="left:1250px;top:409px;width:104px;height:18px;border-right:1px solid #b5b5b5;border-bottom:1px solid #b5b5b5"></div><div class="a" style="left:1354px;top:409px;width:103px;height:18px;border-bottom:1px solid #b5b5b5"></div><div class="t" style="top:411px;left:1251.3px;letter-spacing:-0.34px;font-size:11.5px;">Prethodna nedelja</div><div class="t" style="top:411px;left:1433.7px;transform:scaleX(0.929);transform-origin:0 0;letter-spacing:-0.35px;font-size:11.5px;">0,00</div>
<div class="a" style="left:1250px;top:427px;width:104px;height:18px;border-right:1px solid #b5b5b5;border-bottom:1px solid #b5b5b5"></div><div class="a" style="left:1354px;top:427px;width:103px;height:18px;border-bottom:1px solid #b5b5b5"></div><div class="t" style="top:429px;left:1251.3px;transform:scaleX(0.985);transform-origin:0 0;letter-spacing:-0.35px;font-size:11.5px;">Pre 4 nedelje</div><div class="t" style="top:429px;left:1433.7px;transform:scaleX(0.929);transform-origin:0 0;letter-spacing:-0.35px;font-size:11.5px;">0,00</div>
<div class="a" style="left:1250px;top:445px;width:104px;height:18px;border-right:1px solid #b5b5b5;border-bottom:1px solid #b5b5b5"></div><div class="a" style="left:1354px;top:445px;width:103px;height:18px;border-bottom:1px solid #b5b5b5"></div><div class="t" style="top:447px;left:1251.3px;transform:scaleX(0.999);transform-origin:0 0;letter-spacing:-0.35px;font-size:11.5px;">Zadnja nabavka</div><div class="t" style="top:447px;left:1355.8px;letter-spacing:-0.27px;font-size:11.5px;">19.09.23</div>
<div class="a" style="left:1250px;top:463px;width:104px;height:18px;border-right:1px solid #b5b5b5;border-bottom:1px solid #b5b5b5"></div><div class="a" style="left:1354px;top:463px;width:103px;height:18px;border-bottom:1px solid #b5b5b5"></div><div class="t" style="top:465px;left:1251.3px;transform:scaleX(0.996);transform-origin:0 0;letter-spacing:-0.35px;font-size:11.5px;">Naziv dobavljača</div><div class="t" style="top:465px;left:1355.8px;transform:scaleX(0.855);transform-origin:0 0;letter-spacing:-0.35px;font-size:11.5px;">MAGNUM</div>
<div class="a" style="left:1250px;top:481px;width:104px;height:18px;border-right:1px solid #b5b5b5;border-bottom:1px solid #b5b5b5"></div><div class="a" style="left:1354px;top:481px;width:103px;height:18px;border-bottom:1px solid #b5b5b5"></div><div class="t" style="top:483px;left:1251.3px;letter-spacing:-0.27px;font-size:11.5px;">Zadnja prodaja</div><div class="t" style="top:483px;left:1355.8px;letter-spacing:-0.27px;font-size:11.5px;">12.07.23</div>
<div class="a" style="left:1250px;top:499px;width:104px;height:18px;border-right:1px solid #b5b5b5;border-bottom:1px solid #b5b5b5"></div><div class="a" style="left:1354px;top:499px;width:103px;height:18px;border-bottom:1px solid #b5b5b5"></div><div class="t" style="top:501px;left:1251.3px;transform:scaleX(0.964);transform-origin:0 0;letter-spacing:-0.35px;font-size:11.5px;">Naziv kupca</div><div class="t" style="top:501px;left:1355.8px;transform:scaleX(0.913);transform-origin:0 0;letter-spacing:-0.35px;font-size:11.5px;">TEST FIRMA DOO</div>
<div class="t" style="top:528.5px;left:1259.6px;letter-spacing:-0.07px;font-size:11px;">Stanje i promet artikla 009182</div>
<svg class="a" style="left:0;top:0" width="1457" height="820" viewBox="0 0 1457 820"><path d="M1263.5 555V637.5H1444.46" fill="none" stroke="#000" stroke-width="1"/><polyline points="1263.5,637.5 1278.6,637.5 1293.7,637.5 1308.7,637.5 1323.8,637.5 1338.9,637.5 1354.0,637.5 1369.1,629.8 1384.1,637.5 1399.2,637.5 1414.3,637.5 1429.4,637.5 1444.5,637.5" fill="none" stroke="#6a8dba" stroke-width="2"/><path d="M1369.1 627.2l2.6 2.6-2.6 2.6-2.6-2.6z" fill="#5b80b0"/><path d="M1399.2 634.9l2.6 2.6-2.6 2.6-2.6-2.6z" fill="#5b80b0"/><polyline points="1263.5,637.5 1278.6,637.5 1293.7,637.5 1308.7,637.5 1323.8,637.5 1338.9,637.5 1354.0,637.5 1369.1,562.0 1384.1,637.5 1399.2,629.8 1414.3,637.5" fill="none" stroke="#f7c76a" stroke-width="2"/><polyline points="1263.5,637.5 1278.6,637.5 1293.7,637.5 1308.7,637.5 1323.8,637.5 1338.9,637.5 1354.0,637.5 1369.1,570.2 1384.1,570.2 1399.2,562.5 1414.3,562.5 1429.4,562.5 1444.5,562.5" fill="none" stroke="#ae5e7e" stroke-width="2.2"/><path d="M1263.5 634.9l2.6 2.6-2.6 2.6-2.6-2.6z" fill="#f5c264"/><path d="M1278.6 634.9l2.6 2.6-2.6 2.6-2.6-2.6z" fill="#f5c264"/><path d="M1293.7 634.9l2.6 2.6-2.6 2.6-2.6-2.6z" fill="#f5c264"/><path d="M1308.7 634.9l2.6 2.6-2.6 2.6-2.6-2.6z" fill="#f5c264"/><path d="M1323.8 634.9l2.6 2.6-2.6 2.6-2.6-2.6z" fill="#f5c264"/><path d="M1338.9 634.9l2.6 2.6-2.6 2.6-2.6-2.6z" fill="#f5c264"/><path d="M1354.0 634.9l2.6 2.6-2.6 2.6-2.6-2.6z" fill="#f5c264"/><path d="M1369.1 559.4l2.6 2.6-2.6 2.6-2.6-2.6z" fill="#f5c264"/><path d="M1384.1 634.9l2.6 2.6-2.6 2.6-2.6-2.6z" fill="#f5c264"/><path d="M1414.3 634.9l2.6 2.6-2.6 2.6-2.6-2.6z" fill="#f5c264"/><path d="M1429.4 634.9l2.6 2.6-2.6 2.6-2.6-2.6z" fill="#f5c264"/><path d="M1444.5 634.9l2.6 2.6-2.6 2.6-2.6-2.6z" fill="#f5c264"/><path d="M1399.2 627.2l2.6 2.6-2.6 2.6-2.6-2.6z" fill="#f5c264"/><path d="M1369.1 567.6l2.6 2.6-2.6 2.6-2.6-2.6z" fill="#a05070"/><path d="M1384.1 567.6l2.6 2.6-2.6 2.6-2.6-2.6z" fill="#a05070"/><path d="M1399.2 559.9l2.6 2.6-2.6 2.6-2.6-2.6z" fill="#a05070"/><path d="M1414.3 559.9l2.6 2.6-2.6 2.6-2.6-2.6z" fill="#a05070"/><path d="M1429.4 559.9l2.6 2.6-2.6 2.6-2.6-2.6z" fill="#a05070"/><path d="M1444.5 559.9l2.6 2.6-2.6 2.6-2.6-2.6z" fill="#a05070"/></svg>
<div class="a" style="left:1249.5px;top:115.5px;width:207px;height:680px;border:1px solid #a9a9a9;border-bottom:none"></div>
<div class="a" style="left:1250px;top:795px;width:207px;height:23px;background:#f0f0f0"></div>
<div class="a" style="left:1250.5px;top:796.2px;width:152.2px;height:20.5px;background:linear-gradient(#fbfbfb,#ebebeb);border:1px solid #cfcfcf;box-shadow:inset 1px 1px 0 #fff"></div>
<div class="a" style="left:1405.3px;top:796.2px;width:16.4px;height:20.5px;background:linear-gradient(#fbfbfb,#ebebeb);border:1px solid #cfcfcf;box-shadow:inset 1px 1px 0 #fff"></div>
<div class="a" style="left:1424px;top:796.2px;width:32px;height:20.5px;background:linear-gradient(#fbfbfb,#ebebeb);border:1px solid #cfcfcf;box-shadow:inset 1px 1px 0 #fff"></div>
<div class="a" style="left:1253px;top:801px;width:11px;height:11px;background:#fff;border:1px solid #111"></div><svg class="a" style="left:1254px;top:802px" width="9" height="9" viewBox="0 0 9 9"><path d="M1.3 4.5l2.2 2.5 4-5" fill="none" stroke="#111" stroke-width="1.5"/></svg>
<div class="t" style="top:799px;left:1269.2px;letter-spacing:-0.3px;">1</div>
<div class="a" style="left:1280.5px;top:801px;width:11px;height:11px;background:#fff;border:1px solid #111"></div><svg class="a" style="left:1281.5px;top:802px" width="9" height="9" viewBox="0 0 9 9"><path d="M1.3 4.5l2.2 2.5 4-5" fill="none" stroke="#111" stroke-width="1.5"/></svg>
<div class="t" style="top:799px;left:1296.7px;letter-spacing:-0.3px;">2</div>
<div class="a" style="left:1308px;top:801px;width:11px;height:11px;background:#fff;border:1px solid #111"></div><svg class="a" style="left:1309px;top:802px" width="9" height="9" viewBox="0 0 9 9"><path d="M1.3 4.5l2.2 2.5 4-5" fill="none" stroke="#111" stroke-width="1.5"/></svg>
<div class="t" style="top:799px;left:1324.1000000000001px;letter-spacing:-0.3px;">8</div>
<div class="a" style="left:1334.7px;top:801px;width:11px;height:11px;background:#fff;border:1px solid #111"></div><svg class="a" style="left:1335.7px;top:802px" width="9" height="9" viewBox="0 0 9 9"><path d="M1.3 4.5l2.2 2.5 4-5" fill="none" stroke="#111" stroke-width="1.5"/></svg>
<div class="t" style="top:799px;left:1350.5px;letter-spacing:-0.3px;">9</div>
<div class="a" style="left:1362.2px;top:801px;width:11px;height:11px;background:#fff;border:1px solid #111"></div>
<div class="t" style="top:799px;left:1377.2px;letter-spacing:-0.3px;">K</div>
<div class="a" style="left:1427px;top:801px;width:11px;height:11px;background:#fff;border:1px solid #111"></div>
<div class="t" style="top:799px;left:1442.4px;letter-spacing:-0.3px;">F</div>
<div class="a" style="left:1247.6px;top:90px;width:2.4px;height:728px;background:#c4c4c4"></div>
<div class="a" style="left:211px;top:114px;width:1.6px;height:704px;background:#b4b4b4"></div>
<div class="a" style="left:0;top:818px;width:1457px;height:2px;background:linear-gradient(#7d98c4,#2b579a)"></div>
<div class="a" style="left:660.3px;top:331.2px;width:110.7px;height:31.6px;border:4.5px solid #ed1c24"></div>
<div class="a" style="left:195px;top:384px;width:964px;height:143.8px;border:5px solid #ed1c24"></div>
</body></html>
